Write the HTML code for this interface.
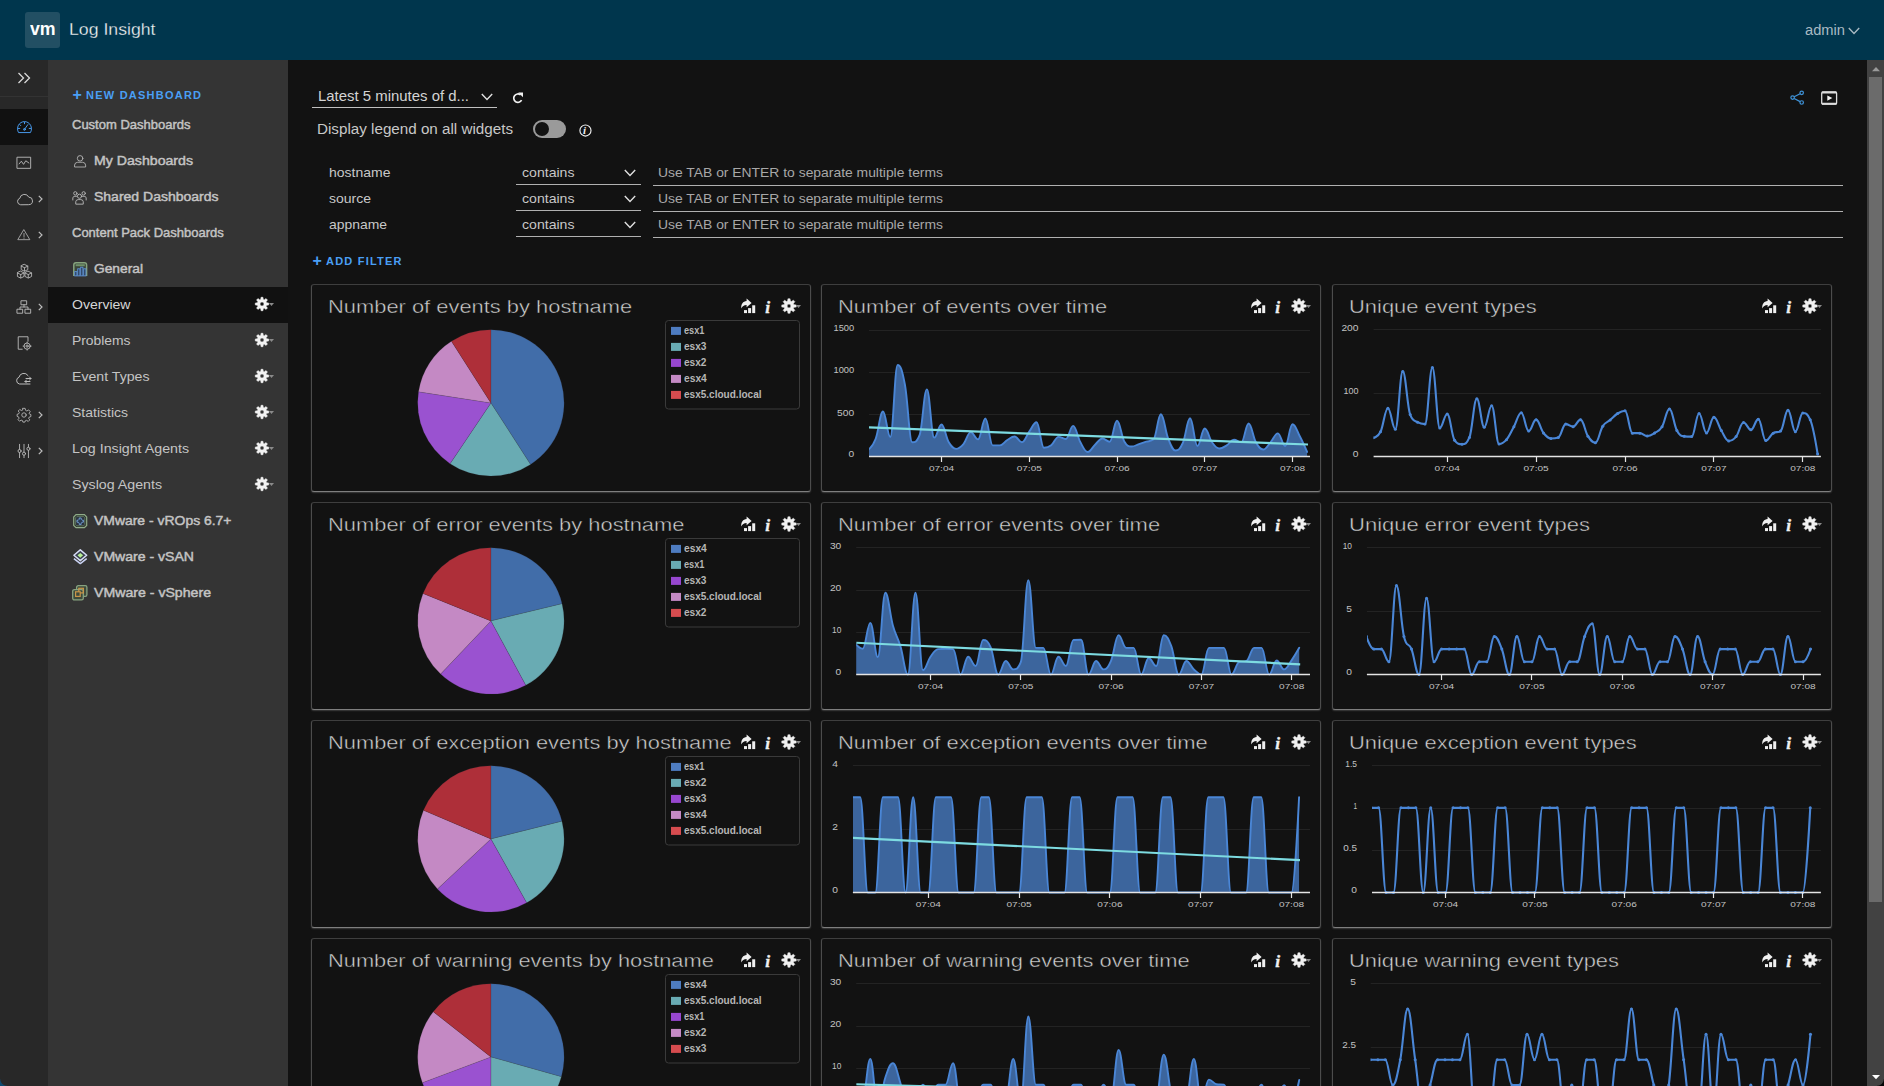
<!DOCTYPE html>
<html lang="en">
<head>
<meta charset="utf-8">
<title>Log Insight</title>
<style>
html,body{margin:0;padding:0;}
body{width:1884px;height:1086px;overflow:hidden;background:#121212;position:relative;font-family:"Liberation Sans",sans-serif;color:#c8c8c8;}
.t{position:absolute;white-space:nowrap;margin:0;padding:0;transform-origin:0 50%;}
.abs{position:absolute;}
svg{position:absolute;overflow:visible;}
.panel{position:absolute;width:498px;height:206px;border:1px solid #4c4c4c;border-top-color:#3e3e3e;border-bottom-color:#7e7e7e;border-radius:3px;box-shadow:0 1px 1.5px 0 #3c3c3c;background:#121212;}
.ul{position:absolute;height:1px;background:#b0b0b0;}
svg text{font-family:"Liberation Sans",sans-serif;}
</style>
</head>
<body>
<div class="abs" style="left:0;top:0;width:1884px;height:60px;background:#00364d;"></div>
<div class="abs" style="left:24.6px;top:12px;width:35.4px;height:36px;border-radius:3px;background:#224f63;"></div>
<div class="t" style="left:29.80px;top:18.00px;font-size:19px;line-height:21px;color:#ffffff;font-weight:700;transform:scaleX(0.9322);">vm</div>
<div class="t" style="left:69.00px;top:20.00px;font-size:17px;line-height:19px;color:#fafafa;transform:scaleX(1.0400);-webkit-text-stroke:0.3px #00364d;">Log Insight</div>
<div class="t" style="left:1805.00px;top:22.00px;font-size:14px;line-height:16px;color:#a9bac3;transform:scaleX(1.0490);">admin</div>
<svg style="left:1848px;top:27px" width="12" height="8" viewBox="0 0 12 8"><path d="M0.8 1 L6 6.4 L11.2 1" fill="none" stroke="#a9bac3" stroke-width="1.4"/></svg>
<div class="abs" style="left:0;top:60px;width:48px;height:1026px;background:#282828;"></div>
<div class="abs" style="left:0;top:96px;width:48px;height:1px;background:#333333;"></div>
<div class="abs" style="left:0;top:109px;width:48px;height:36px;background:#111111;"></div>
<svg style="left:17px;top:72px" width="14" height="12" viewBox="0 0 14 12"><path d="M1.5 1 L6.5 6 L1.5 11 M7.5 1 L12.5 6 L7.5 11" fill="none" stroke="#d8d8d8" stroke-width="1.3"/></svg>
<svg style="left:15.5px;top:118.5px" width="17" height="17" viewBox="0 0 36 36" fill="none" stroke="#4a9ff5" stroke-width="2" stroke-linecap="round" stroke-linejoin="round"><path d="M5 28 A15 15 0 1 1 31 28 Z"/><path d="M18 22 L25 12"/><circle cx="18" cy="22" r="2"/><path d="M18 7 v3 M8 12 l2 2 M5 20 h3 M28 20 h3"/></svg>
<svg style="left:16.0px;top:155.0px" width="16" height="16" viewBox="0 0 36 36" fill="none" stroke="#bdbdbd" stroke-width="2" stroke-linecap="round" stroke-linejoin="round"><rect x="3" y="5" width="30" height="25"/><path d="M7 20 L12 14 L17 21 L22 13 L29 18"/></svg>
<svg style="left:15.5px;top:190.5px" width="17" height="17" viewBox="0 0 36 36" fill="none" stroke="#bdbdbd" stroke-width="2" stroke-linecap="round" stroke-linejoin="round"><path d="M9 29 A7 7 0 0 1 8 15.5 A10 10 0 0 1 27 13 A8 8 0 0 1 27 29 Z"/></svg>
<svg style="left:37.5px;top:195px" width="5" height="8" viewBox="0 0 5 8"><path d="M0.8 0.8 L4 4 L0.8 7.2" fill="none" stroke="#bdbdbd" stroke-width="1.2"/></svg>
<svg style="left:17.0px;top:228.0px" width="14" height="14" viewBox="0 0 36 36" fill="none" stroke="#bdbdbd" stroke-width="2" stroke-linecap="round" stroke-linejoin="round"><path d="M18 5 L33 30 H3 Z"/><path d="M18 14 V22 M18 25.5 V26.5"/></svg>
<svg style="left:37.5px;top:231px" width="5" height="8" viewBox="0 0 5 8"><path d="M0.8 0.8 L4 4 L0.8 7.2" fill="none" stroke="#bdbdbd" stroke-width="1.2"/></svg>
<svg style="left:15.5px;top:262.5px" width="17" height="17" viewBox="0 0 36 36" fill="none" stroke="#bdbdbd" stroke-width="1.8" stroke-linecap="round" stroke-linejoin="round"><path d="M18 3 L25 6.5 V14 L18 17.5 L11 14 V6.5 Z M11 6.5 L18 10 L25 6.5 M18 10 V17"/><path d="M10 17.5 L17 21 V28.5 L10 32 L3 28.5 V21 Z M3 21 L10 24.5 L17 21 M10 24.5 V31"/><path d="M26 17.5 L33 21 V28.5 L26 32 L19 28.5 V21 Z M19 21 L26 24.5 L33 21 M26 24.5 V31"/></svg>
<svg style="left:16.0px;top:299.0px" width="16" height="16" viewBox="0 0 36 36" fill="none" stroke="#bdbdbd" stroke-width="2" stroke-linecap="round" stroke-linejoin="round"><rect x="12" y="4" width="12" height="9"/><rect x="3" y="23" width="12" height="9"/><rect x="21" y="23" width="12" height="9"/><path d="M18 13 V18 M9 23 V18 H27 V23"/></svg>
<svg style="left:37.5px;top:303px" width="5" height="8" viewBox="0 0 5 8"><path d="M0.8 0.8 L4 4 L0.8 7.2" fill="none" stroke="#bdbdbd" stroke-width="1.2"/></svg>
<svg style="left:16.0px;top:335.0px" width="16" height="16" viewBox="0 0 36 36" fill="none" stroke="#bdbdbd" stroke-width="2" stroke-linecap="round" stroke-linejoin="round"><path d="M14 32 H5 V4 H27 V14"/><circle cx="25" cy="25" r="7"/><circle cx="25" cy="25" r="2.5"/><path d="M25 16 v2 M25 32 v2 M16 25 h2 M32 25 h2"/></svg>
<svg style="left:15.0px;top:370.0px" width="18" height="18" viewBox="0 0 36 36" fill="none" stroke="#bdbdbd" stroke-width="2" stroke-linecap="round" stroke-linejoin="round"><path d="M30 28 H9 A7 7 0 0 1 8 14.5 A10 10 0 0 1 26 11"/><path d="M22 17 H32 M29 14 L32 17 L29 20 M30 23 H20 M23 20 L20 23 L23 26"/></svg>
<svg style="left:16.0px;top:407.0px" width="16" height="16" viewBox="0 0 36 36" fill="none" stroke="#bdbdbd" stroke-width="1.9" stroke-linecap="round" stroke-linejoin="round"><circle cx="18" cy="18" r="5"/><path d="M15.5 3 H20.5 L21.5 7.5 L24.5 9 L28.5 6.5 L32 10.5 L29.5 14 L30.5 16 L33.5 17 V21.5 L30 22.5 L28.5 25.5 L31 29 L27.5 32.5 L24 30 L21 31 L20 34 H15.5 L14.5 30.5 L11.5 29.5 L8 32 L4.5 28.5 L7 25 L5.5 22 L2.5 21 V16.5 L6 15.5 L7.5 12.5 L5 9 L8.5 5.5 L12 8 L14.5 7 Z"/></svg>
<svg style="left:37.5px;top:411px" width="5" height="8" viewBox="0 0 5 8"><path d="M0.8 0.8 L4 4 L0.8 7.2" fill="none" stroke="#bdbdbd" stroke-width="1.2"/></svg>
<svg style="left:16.0px;top:443.0px" width="16" height="16" viewBox="0 0 36 36" fill="none" stroke="#bdbdbd" stroke-width="2" stroke-linecap="round" stroke-linejoin="round"><path d="M8 3 V14 M8 22 V33 M18 3 V20 M18 28 V33 M28 3 V9 M28 17 V33"/><circle cx="8" cy="18" r="3.5"/><circle cx="18" cy="24" r="3.5"/><circle cx="28" cy="13" r="3.5"/></svg>
<svg style="left:37.5px;top:447px" width="5" height="8" viewBox="0 0 5 8"><path d="M0.8 0.8 L4 4 L0.8 7.2" fill="none" stroke="#bdbdbd" stroke-width="1.2"/></svg>
<div class="abs" style="left:48px;top:60px;width:240px;height:1026px;background:#343434;"></div>
<div class="abs" style="left:48px;top:287px;width:240px;height:36px;background:#111111;"></div>
<div class="t" style="left:72.60px;top:86.30px;font-size:16px;line-height:17px;color:#4a9ff5;font-weight:700;">+</div>
<div class="t" style="left:86.00px;top:89.00px;font-size:11px;line-height:12px;color:#4a9ff5;font-weight:700;letter-spacing:1.232px;">NEW DASHBOARD</div>
<div class="t" style="left:72.00px;top:117.00px;font-size:13px;line-height:15px;color:#c4c4c4;-webkit-text-stroke:0.45px #c4c4c4;">Custom Dashboards</div>
<div class="t" style="left:94.00px;top:153.00px;font-size:13px;line-height:15px;color:#c4c4c4;transform:scaleX(1.0875);-webkit-text-stroke:0.45px #c4c4c4;">My Dashboards</div>
<div class="t" style="left:94.00px;top:189.00px;font-size:13px;line-height:15px;color:#c4c4c4;transform:scaleX(1.0767);-webkit-text-stroke:0.45px #c4c4c4;">Shared Dashboards</div>
<div class="t" style="left:72.00px;top:225.00px;font-size:13px;line-height:15px;color:#c4c4c4;-webkit-text-stroke:0.45px #c4c4c4;">Content Pack Dashboards</div>
<div class="t" style="left:94.00px;top:261.00px;font-size:13px;line-height:15px;color:#c4c4c4;transform:scaleX(1.0595);-webkit-text-stroke:0.45px #c4c4c4;">General</div>
<div class="t" style="left:72.00px;top:297.00px;font-size:13.5px;line-height:15px;color:#d6d6d6;transform:scaleX(1.0398);">Overview</div>
<svg style="left:253.50px;top:296.40px" width="16" height="16" viewBox="0 0 16 16"><path d="M6.73 3.43 L7.00 1.29 L9.00 1.29 L9.27 3.43 L10.34 3.87 L12.04 2.54 L13.46 3.96 L12.13 5.66 L12.57 6.73 L14.71 7.00 L14.71 9.00 L12.57 9.27 L12.13 10.34 L13.46 12.04 L12.04 13.46 L10.34 12.13 L9.27 12.57 L9.00 14.71 L7.00 14.71 L6.73 12.57 L5.66 12.13 L3.96 13.46 L2.54 12.04 L3.87 10.34 L3.43 9.27 L1.29 9.00 L1.29 7.00 L3.43 6.73 L3.87 5.66 L2.54 3.96 L3.96 2.54 L5.66 3.87 Z M6.00 8.00 A2.0 2.0 0 1 0 10.00 8.00 A2.0 2.0 0 1 0 6.00 8.00 Z" fill="#f2f2f2" fill-rule="evenodd" stroke="#f2f2f2" stroke-width="0.5" stroke-linejoin="round"/></svg><svg style="left:268.57px;top:303.40px" width="5" height="3" viewBox="0 0 5 3"><path d="M0 0 H5 L2.5 3 Z" fill="#8a8a8a"/></svg>
<div class="t" style="left:72.00px;top:333.00px;font-size:13.5px;line-height:15px;color:#c4c4c4;transform:scaleX(1.0260);">Problems</div>
<svg style="left:253.50px;top:332.40px" width="16" height="16" viewBox="0 0 16 16"><path d="M6.73 3.43 L7.00 1.29 L9.00 1.29 L9.27 3.43 L10.34 3.87 L12.04 2.54 L13.46 3.96 L12.13 5.66 L12.57 6.73 L14.71 7.00 L14.71 9.00 L12.57 9.27 L12.13 10.34 L13.46 12.04 L12.04 13.46 L10.34 12.13 L9.27 12.57 L9.00 14.71 L7.00 14.71 L6.73 12.57 L5.66 12.13 L3.96 13.46 L2.54 12.04 L3.87 10.34 L3.43 9.27 L1.29 9.00 L1.29 7.00 L3.43 6.73 L3.87 5.66 L2.54 3.96 L3.96 2.54 L5.66 3.87 Z M6.00 8.00 A2.0 2.0 0 1 0 10.00 8.00 A2.0 2.0 0 1 0 6.00 8.00 Z" fill="#f2f2f2" fill-rule="evenodd" stroke="#f2f2f2" stroke-width="0.5" stroke-linejoin="round"/></svg><svg style="left:268.57px;top:339.40px" width="5" height="3" viewBox="0 0 5 3"><path d="M0 0 H5 L2.5 3 Z" fill="#8a8a8a"/></svg>
<div class="t" style="left:72.00px;top:369.00px;font-size:13.5px;line-height:15px;color:#c4c4c4;transform:scaleX(1.0467);">Event Types</div>
<svg style="left:253.50px;top:368.40px" width="16" height="16" viewBox="0 0 16 16"><path d="M6.73 3.43 L7.00 1.29 L9.00 1.29 L9.27 3.43 L10.34 3.87 L12.04 2.54 L13.46 3.96 L12.13 5.66 L12.57 6.73 L14.71 7.00 L14.71 9.00 L12.57 9.27 L12.13 10.34 L13.46 12.04 L12.04 13.46 L10.34 12.13 L9.27 12.57 L9.00 14.71 L7.00 14.71 L6.73 12.57 L5.66 12.13 L3.96 13.46 L2.54 12.04 L3.87 10.34 L3.43 9.27 L1.29 9.00 L1.29 7.00 L3.43 6.73 L3.87 5.66 L2.54 3.96 L3.96 2.54 L5.66 3.87 Z M6.00 8.00 A2.0 2.0 0 1 0 10.00 8.00 A2.0 2.0 0 1 0 6.00 8.00 Z" fill="#f2f2f2" fill-rule="evenodd" stroke="#f2f2f2" stroke-width="0.5" stroke-linejoin="round"/></svg><svg style="left:268.57px;top:375.40px" width="5" height="3" viewBox="0 0 5 3"><path d="M0 0 H5 L2.5 3 Z" fill="#8a8a8a"/></svg>
<div class="t" style="left:72.00px;top:405.00px;font-size:13.5px;line-height:15px;color:#c4c4c4;transform:scaleX(1.0368);">Statistics</div>
<svg style="left:253.50px;top:404.40px" width="16" height="16" viewBox="0 0 16 16"><path d="M6.73 3.43 L7.00 1.29 L9.00 1.29 L9.27 3.43 L10.34 3.87 L12.04 2.54 L13.46 3.96 L12.13 5.66 L12.57 6.73 L14.71 7.00 L14.71 9.00 L12.57 9.27 L12.13 10.34 L13.46 12.04 L12.04 13.46 L10.34 12.13 L9.27 12.57 L9.00 14.71 L7.00 14.71 L6.73 12.57 L5.66 12.13 L3.96 13.46 L2.54 12.04 L3.87 10.34 L3.43 9.27 L1.29 9.00 L1.29 7.00 L3.43 6.73 L3.87 5.66 L2.54 3.96 L3.96 2.54 L5.66 3.87 Z M6.00 8.00 A2.0 2.0 0 1 0 10.00 8.00 A2.0 2.0 0 1 0 6.00 8.00 Z" fill="#f2f2f2" fill-rule="evenodd" stroke="#f2f2f2" stroke-width="0.5" stroke-linejoin="round"/></svg><svg style="left:268.57px;top:411.40px" width="5" height="3" viewBox="0 0 5 3"><path d="M0 0 H5 L2.5 3 Z" fill="#8a8a8a"/></svg>
<div class="t" style="left:72.00px;top:441.00px;font-size:13.5px;line-height:15px;color:#c4c4c4;transform:scaleX(1.0533);">Log Insight Agents</div>
<svg style="left:253.50px;top:440.40px" width="16" height="16" viewBox="0 0 16 16"><path d="M6.73 3.43 L7.00 1.29 L9.00 1.29 L9.27 3.43 L10.34 3.87 L12.04 2.54 L13.46 3.96 L12.13 5.66 L12.57 6.73 L14.71 7.00 L14.71 9.00 L12.57 9.27 L12.13 10.34 L13.46 12.04 L12.04 13.46 L10.34 12.13 L9.27 12.57 L9.00 14.71 L7.00 14.71 L6.73 12.57 L5.66 12.13 L3.96 13.46 L2.54 12.04 L3.87 10.34 L3.43 9.27 L1.29 9.00 L1.29 7.00 L3.43 6.73 L3.87 5.66 L2.54 3.96 L3.96 2.54 L5.66 3.87 Z M6.00 8.00 A2.0 2.0 0 1 0 10.00 8.00 A2.0 2.0 0 1 0 6.00 8.00 Z" fill="#f2f2f2" fill-rule="evenodd" stroke="#f2f2f2" stroke-width="0.5" stroke-linejoin="round"/></svg><svg style="left:268.57px;top:447.40px" width="5" height="3" viewBox="0 0 5 3"><path d="M0 0 H5 L2.5 3 Z" fill="#8a8a8a"/></svg>
<div class="t" style="left:72.00px;top:477.00px;font-size:13.5px;line-height:15px;color:#c4c4c4;transform:scaleX(1.0520);">Syslog Agents</div>
<svg style="left:253.50px;top:476.40px" width="16" height="16" viewBox="0 0 16 16"><path d="M6.73 3.43 L7.00 1.29 L9.00 1.29 L9.27 3.43 L10.34 3.87 L12.04 2.54 L13.46 3.96 L12.13 5.66 L12.57 6.73 L14.71 7.00 L14.71 9.00 L12.57 9.27 L12.13 10.34 L13.46 12.04 L12.04 13.46 L10.34 12.13 L9.27 12.57 L9.00 14.71 L7.00 14.71 L6.73 12.57 L5.66 12.13 L3.96 13.46 L2.54 12.04 L3.87 10.34 L3.43 9.27 L1.29 9.00 L1.29 7.00 L3.43 6.73 L3.87 5.66 L2.54 3.96 L3.96 2.54 L5.66 3.87 Z M6.00 8.00 A2.0 2.0 0 1 0 10.00 8.00 A2.0 2.0 0 1 0 6.00 8.00 Z" fill="#f2f2f2" fill-rule="evenodd" stroke="#f2f2f2" stroke-width="0.5" stroke-linejoin="round"/></svg><svg style="left:268.57px;top:483.40px" width="5" height="3" viewBox="0 0 5 3"><path d="M0 0 H5 L2.5 3 Z" fill="#8a8a8a"/></svg>
<div class="t" style="left:94.00px;top:513.00px;font-size:13px;line-height:15px;color:#c4c4c4;transform:scaleX(1.0722);-webkit-text-stroke:0.45px #c4c4c4;">VMware - vROps 6.7+</div>
<div class="t" style="left:94.00px;top:549.00px;font-size:13px;line-height:15px;color:#c4c4c4;transform:scaleX(1.0816);-webkit-text-stroke:0.45px #c4c4c4;">VMware - vSAN</div>
<div class="t" style="left:94.00px;top:585.00px;font-size:13px;line-height:15px;color:#c4c4c4;transform:scaleX(1.0869);-webkit-text-stroke:0.45px #c4c4c4;">VMware - vSphere</div>
<svg style="left:72.5px;top:154.1px" width="14.2" height="14.2" viewBox="0 0 36 36" fill="none" stroke="#b8b8b8" stroke-width="2.2" stroke-linecap="round" stroke-linejoin="round"><circle cx="18" cy="11" r="7"/><path d="M4 32 V28 A8 8 0 0 1 12 21 H24 A8 8 0 0 1 32 28 V32 Z"/></svg>
<svg style="left:72.1px;top:189.7px" width="15" height="15" viewBox="0 0 36 36" fill="none" stroke="#b8b8b8" stroke-width="2.2" stroke-linecap="round" stroke-linejoin="round"><circle cx="18" cy="15" r="5"/><path d="M9 33 V28 A6 6 0 0 1 15 23 H21 A6 6 0 0 1 27 28 V33 Z"/><circle cx="8" cy="8" r="4"/><circle cx="28" cy="8" r="4"/><path d="M2 24 V19 A5 5 0 0 1 7 15 H11 M34 24 V19 A5 5 0 0 0 29 15 H25"/></svg>
<svg style="left:72.7px;top:261.8px" width="14.4" height="14.4" viewBox="0 0 14.4 14.4"><path d="M0.8 14 V3 Q0.8 0.8 3 0.8 H11.4 Q13.6 0.8 13.6 3 V14" fill="#3b463a" stroke="#86a47e" stroke-width="1.5"/><path d="M2.6 3.2 H11.8" stroke="#6f8f68" stroke-width="2"/><g fill="#2c3f5a" stroke="#5f93d6" stroke-width="0.9"><rect x="1.7" y="9.6" width="2.2" height="4.3"/><rect x="4.7" y="6.8" width="2.2" height="7.1"/><rect x="7.7" y="5.2" width="2.2" height="8.7"/><rect x="10.7" y="6.8" width="2.2" height="7.1"/></g></svg>
<svg style="left:72.8px;top:513.8px" width="14.4" height="14.4" viewBox="0 0 14.4 14.4"><path d="M3 0.7 H11.4 L13.7 3 V11.4 L11.4 13.7 H3 L0.7 11.4 V3 Z" fill="#2f382f" stroke="#8fab88" stroke-width="1.2"/><path d="M3.8 2.6 H10.6 L11.8 3.8 V10.6 L10.6 11.8 H3.8 L2.6 10.6 V3.8 Z" fill="#2c3340" stroke="#6f8a6a" stroke-width="0.7"/><path d="M6.2 4 H8.2 V5.3 L9.1 6.2 H10.4 V8.2 H9.1 L8.2 9.1 V10.4 H6.2 V9.1 L5.3 8.2 H4 V6.2 H5.3 L6.2 5.3 Z" fill="#2a3a50" stroke="#78a6dc" stroke-width="0.9" stroke-linejoin="round"/></svg>
<svg style="left:72.8px;top:548.6px" width="14.6" height="16.6" viewBox="0 0 14.6 16.6"><path d="M0.9 9.6 L7.3 14.6 L13.7 9.6" fill="none" stroke="#c9d2f3" stroke-width="1.5" stroke-linejoin="round"/><path d="M7.3 0.9 L13.7 6.3 L7.3 11.7 L0.9 6.3 Z" fill="#3b4150" stroke="#d6dcf6" stroke-width="1.5" stroke-linejoin="round"/><path d="M7.3 3.9 L10.1 6.3 L7.3 8.7 L4.5 6.3 Z" fill="#b6ee92"/></svg>
<svg style="left:72.4px;top:585.2px" width="15.6" height="15.6" viewBox="0 0 15.6 15.6"><rect x="4.6" y="0.7" width="10.3" height="10.6" rx="1.6" fill="#3d4a3b" stroke="#87a380" stroke-width="1.3"/><rect x="0.7" y="4.6" width="10.6" height="10.3" rx="1.6" fill="#3d4a3b" stroke="#87a380" stroke-width="1.3"/><rect x="6.8" y="3.3" width="4.6" height="4.6" fill="none" stroke="#c9964a" stroke-width="1.2"/><rect x="3.6" y="6.8" width="4.6" height="4.6" fill="#3d4a3b" stroke="#c9964a" stroke-width="1.2"/></svg>
<div class="abs" style="left:1867px;top:60px;width:17px;height:1026px;background:#424242;"></div>
<div class="abs" style="left:1869px;top:77px;width:13px;height:825px;background:#6b6b6b;"></div>
<svg style="left:1871.5px;top:66.8px" width="8" height="4.2" viewBox="0 0 8 4.2"><path d="M0 4.2 L4 0 L8 4.2 Z" fill="#9a9a9a"/></svg>
<svg style="left:1871.5px;top:1075px" width="8" height="4.2" viewBox="0 0 8 4.2"><path d="M0 0 L4 4.2 L8 0 Z" fill="#ffffff"/></svg>
<div class="abs" style="left:0;top:1079px;width:7px;height:7px;background:radial-gradient(circle at 7px 0px, rgba(40,40,40,0) 6.3px, #0d4a70 7.2px);"></div>
<div class="abs" style="left:1877px;top:1079px;width:7px;height:7px;background:radial-gradient(circle at 0px 0px, rgba(66,66,66,0) 6.3px, #050505 7.2px);"></div>
<div class="t" style="left:317.50px;top:88.00px;font-size:14.5px;line-height:16px;color:#d4d4d4;transform:scaleX(1.0294);">Latest 5 minutes of d...</div>
<div class="ul" style="left:312px;top:107px;width:185px;background:#c0c0c0;"></div>
<svg style="left:480.6px;top:93px" width="12" height="8" viewBox="0 0 12 8"><path d="M0.8 1 L6 6.4 L11.2 1" fill="none" stroke="#e0e0e0" stroke-width="1.4"/></svg>
<svg style="left:512px;top:92px" width="12" height="12" viewBox="0 0 12 12"><path d="M9.6 8.2 A4.2 4.2 0 1 1 8.6 2.9" fill="none" stroke="#f0f0f0" stroke-width="1.7"/><path d="M6.3 0.6 H11 V5.3 Z" fill="#f0f0f0"/></svg>
<div class="t" style="left:317.00px;top:121.00px;font-size:14px;line-height:16px;color:#c8c8c8;transform:scaleX(1.0856);">Display legend on all widgets</div>
<div class="abs" style="left:533px;top:120px;width:33px;height:18px;border-radius:9px;background:#9a9a9a;"></div>
<div class="abs" style="left:535px;top:122px;width:14px;height:14px;border-radius:7px;background:#121212;"></div>
<svg style="left:578.5px;top:123.5px" width="13" height="13" viewBox="0 0 13 13"><circle cx="6.45" cy="6.5" r="5.55" fill="none" stroke="#f0f0f0" stroke-width="1.15"/></svg>
<div class="t" style="left:583.00px;top:124.00px;font-size:11px;line-height:12px;color:#f0f0f0;font-weight:700;font-family:&quot;Liberation Serif&quot;,serif;font-style:italic;">i</div>
<svg style="left:1789.5px;top:90.3px" width="15" height="15" viewBox="0 0 15 15" fill="none" stroke="#3f93d8" stroke-width="1.2"><circle cx="11.7" cy="2.8" r="1.75"/><circle cx="2.6" cy="7.6" r="1.75"/><circle cx="11.7" cy="12.5" r="1.75"/><path d="M4.2 6.8 L10.1 3.7 M4.2 8.5 L10.1 11.6"/></svg>
<svg style="left:1821px;top:91px" width="17" height="14" viewBox="0 0 17 14"><rect x="0.7" y="1.0" width="14.9" height="12.2" rx="1.2" fill="none" stroke="#dcdcdc" stroke-width="1.3"/><path d="M1 1.4 H15.3 M1 12.8 H15.3" stroke="#dcdcdc" stroke-width="2.0" fill="none"/><path d="M6.3 4.4 L11.3 7.1 L6.3 9.8 Z" fill="#f4f4f4"/></svg>
<div class="t" style="left:329.00px;top:165.00px;font-size:13.5px;line-height:15px;color:#c8c8c8;transform:scaleX(1.0374);">hostname</div>
<div class="t" style="left:522.00px;top:165.00px;font-size:13.5px;line-height:15px;color:#c8c8c8;transform:scaleX(1.0441);">contains</div>
<div class="ul" style="left:516px;top:184px;width:125px;"></div>
<svg style="left:623.9px;top:169.4px" width="12" height="8" viewBox="0 0 12 8"><path d="M0.8 1 L6 6.4 L11.2 1" fill="none" stroke="#e0e0e0" stroke-width="1.4"/></svg>
<div class="t" style="left:658.00px;top:165.00px;font-size:13px;line-height:15px;color:#a8a8a8;transform:scaleX(1.0681);">Use TAB or ENTER to separate multiple terms</div>
<div class="ul" style="left:653px;top:185px;width:1190px;"></div>
<div class="t" style="left:329.00px;top:191.00px;font-size:13.5px;line-height:15px;color:#c8c8c8;transform:scaleX(1.0366);">source</div>
<div class="t" style="left:522.00px;top:191.00px;font-size:13.5px;line-height:15px;color:#c8c8c8;transform:scaleX(1.0441);">contains</div>
<div class="ul" style="left:516px;top:210px;width:125px;"></div>
<svg style="left:623.9px;top:195.4px" width="12" height="8" viewBox="0 0 12 8"><path d="M0.8 1 L6 6.4 L11.2 1" fill="none" stroke="#e0e0e0" stroke-width="1.4"/></svg>
<div class="t" style="left:658.00px;top:191.00px;font-size:13px;line-height:15px;color:#a8a8a8;transform:scaleX(1.0681);">Use TAB or ENTER to separate multiple terms</div>
<div class="ul" style="left:653px;top:211px;width:1190px;"></div>
<div class="t" style="left:329.00px;top:217.00px;font-size:13.5px;line-height:15px;color:#c8c8c8;transform:scaleX(1.0303);">appname</div>
<div class="t" style="left:522.00px;top:217.00px;font-size:13.5px;line-height:15px;color:#c8c8c8;transform:scaleX(1.0441);">contains</div>
<div class="ul" style="left:516px;top:236px;width:125px;"></div>
<svg style="left:623.9px;top:221.4px" width="12" height="8" viewBox="0 0 12 8"><path d="M0.8 1 L6 6.4 L11.2 1" fill="none" stroke="#e0e0e0" stroke-width="1.4"/></svg>
<div class="t" style="left:658.00px;top:217.00px;font-size:13px;line-height:15px;color:#a8a8a8;transform:scaleX(1.0681);">Use TAB or ENTER to separate multiple terms</div>
<div class="ul" style="left:653px;top:237px;width:1190px;"></div>
<div class="t" style="left:312.60px;top:252.30px;font-size:16px;line-height:17px;color:#4a9ff5;font-weight:700;">+</div>
<div class="t" style="left:326.00px;top:255.00px;font-size:11px;line-height:12px;color:#4a9ff5;font-weight:700;letter-spacing:1.215px;">ADD FILTER</div>
<div class="panel" style="left:311px;top:284px;"></div>
<div class="t" style="left:328.00px;top:295.50px;font-size:19px;line-height:21px;color:#d2d2d2;transform:scaleX(1.1522);-webkit-text-stroke:0.45px #121212;">Number of events by hostname</div>
<svg style="left:780.80px;top:298.10px" width="16" height="16" viewBox="0 0 16 16"><path d="M6.64 3.09 L6.92 0.78 L9.08 0.78 L9.36 3.09 L10.51 3.56 L12.34 2.13 L13.87 3.66 L12.44 5.49 L12.91 6.64 L15.22 6.92 L15.22 9.08 L12.91 9.36 L12.44 10.51 L13.87 12.34 L12.34 13.87 L10.51 12.44 L9.36 12.91 L9.08 15.22 L6.92 15.22 L6.64 12.91 L5.49 12.44 L3.66 13.87 L2.13 12.34 L3.56 10.51 L3.09 9.36 L0.78 9.08 L0.78 6.92 L3.09 6.64 L3.56 5.49 L2.13 3.66 L3.66 2.13 L5.49 3.56 Z M6.10 8.00 A1.9 1.9 0 1 0 9.90 8.00 A1.9 1.9 0 1 0 6.10 8.00 Z" fill="#f0f0f0" fill-rule="evenodd" stroke="#f0f0f0" stroke-width="0.5" stroke-linejoin="round"/></svg><svg style="left:796.40px;top:305.10px" width="5" height="3" viewBox="0 0 5 3"><path d="M0 0 H5 L2.5 3 Z" fill="#8a8a8a"/></svg>
<div class="panel" style="left:821px;top:284px;"></div>
<div class="t" style="left:838.00px;top:295.50px;font-size:19px;line-height:21px;color:#d2d2d2;transform:scaleX(1.1531);-webkit-text-stroke:0.45px #121212;">Number of events over time</div>
<svg style="left:1290.80px;top:298.10px" width="16" height="16" viewBox="0 0 16 16"><path d="M6.64 3.09 L6.92 0.78 L9.08 0.78 L9.36 3.09 L10.51 3.56 L12.34 2.13 L13.87 3.66 L12.44 5.49 L12.91 6.64 L15.22 6.92 L15.22 9.08 L12.91 9.36 L12.44 10.51 L13.87 12.34 L12.34 13.87 L10.51 12.44 L9.36 12.91 L9.08 15.22 L6.92 15.22 L6.64 12.91 L5.49 12.44 L3.66 13.87 L2.13 12.34 L3.56 10.51 L3.09 9.36 L0.78 9.08 L0.78 6.92 L3.09 6.64 L3.56 5.49 L2.13 3.66 L3.66 2.13 L5.49 3.56 Z M6.10 8.00 A1.9 1.9 0 1 0 9.90 8.00 A1.9 1.9 0 1 0 6.10 8.00 Z" fill="#f0f0f0" fill-rule="evenodd" stroke="#f0f0f0" stroke-width="0.5" stroke-linejoin="round"/></svg><svg style="left:1306.40px;top:305.10px" width="5" height="3" viewBox="0 0 5 3"><path d="M0 0 H5 L2.5 3 Z" fill="#8a8a8a"/></svg>
<div class="panel" style="left:1332px;top:284px;"></div>
<div class="t" style="left:1348.50px;top:295.50px;font-size:19px;line-height:21px;color:#d2d2d2;transform:scaleX(1.1533);-webkit-text-stroke:0.45px #121212;">Unique event types</div>
<svg style="left:1801.80px;top:298.10px" width="16" height="16" viewBox="0 0 16 16"><path d="M6.64 3.09 L6.92 0.78 L9.08 0.78 L9.36 3.09 L10.51 3.56 L12.34 2.13 L13.87 3.66 L12.44 5.49 L12.91 6.64 L15.22 6.92 L15.22 9.08 L12.91 9.36 L12.44 10.51 L13.87 12.34 L12.34 13.87 L10.51 12.44 L9.36 12.91 L9.08 15.22 L6.92 15.22 L6.64 12.91 L5.49 12.44 L3.66 13.87 L2.13 12.34 L3.56 10.51 L3.09 9.36 L0.78 9.08 L0.78 6.92 L3.09 6.64 L3.56 5.49 L2.13 3.66 L3.66 2.13 L5.49 3.56 Z M6.10 8.00 A1.9 1.9 0 1 0 9.90 8.00 A1.9 1.9 0 1 0 6.10 8.00 Z" fill="#f0f0f0" fill-rule="evenodd" stroke="#f0f0f0" stroke-width="0.5" stroke-linejoin="round"/></svg><svg style="left:1817.40px;top:305.10px" width="5" height="3" viewBox="0 0 5 3"><path d="M0 0 H5 L2.5 3 Z" fill="#8a8a8a"/></svg>
<div class="panel" style="left:311px;top:502px;"></div>
<div class="t" style="left:328.00px;top:513.50px;font-size:19px;line-height:21px;color:#d2d2d2;transform:scaleX(1.1519);-webkit-text-stroke:0.45px #121212;">Number of error events by hostname</div>
<svg style="left:780.80px;top:516.10px" width="16" height="16" viewBox="0 0 16 16"><path d="M6.64 3.09 L6.92 0.78 L9.08 0.78 L9.36 3.09 L10.51 3.56 L12.34 2.13 L13.87 3.66 L12.44 5.49 L12.91 6.64 L15.22 6.92 L15.22 9.08 L12.91 9.36 L12.44 10.51 L13.87 12.34 L12.34 13.87 L10.51 12.44 L9.36 12.91 L9.08 15.22 L6.92 15.22 L6.64 12.91 L5.49 12.44 L3.66 13.87 L2.13 12.34 L3.56 10.51 L3.09 9.36 L0.78 9.08 L0.78 6.92 L3.09 6.64 L3.56 5.49 L2.13 3.66 L3.66 2.13 L5.49 3.56 Z M6.10 8.00 A1.9 1.9 0 1 0 9.90 8.00 A1.9 1.9 0 1 0 6.10 8.00 Z" fill="#f0f0f0" fill-rule="evenodd" stroke="#f0f0f0" stroke-width="0.5" stroke-linejoin="round"/></svg><svg style="left:796.40px;top:523.10px" width="5" height="3" viewBox="0 0 5 3"><path d="M0 0 H5 L2.5 3 Z" fill="#8a8a8a"/></svg>
<div class="panel" style="left:821px;top:502px;"></div>
<div class="t" style="left:838.00px;top:513.50px;font-size:19px;line-height:21px;color:#d2d2d2;transform:scaleX(1.1555);-webkit-text-stroke:0.45px #121212;">Number of error events over time</div>
<svg style="left:1290.80px;top:516.10px" width="16" height="16" viewBox="0 0 16 16"><path d="M6.64 3.09 L6.92 0.78 L9.08 0.78 L9.36 3.09 L10.51 3.56 L12.34 2.13 L13.87 3.66 L12.44 5.49 L12.91 6.64 L15.22 6.92 L15.22 9.08 L12.91 9.36 L12.44 10.51 L13.87 12.34 L12.34 13.87 L10.51 12.44 L9.36 12.91 L9.08 15.22 L6.92 15.22 L6.64 12.91 L5.49 12.44 L3.66 13.87 L2.13 12.34 L3.56 10.51 L3.09 9.36 L0.78 9.08 L0.78 6.92 L3.09 6.64 L3.56 5.49 L2.13 3.66 L3.66 2.13 L5.49 3.56 Z M6.10 8.00 A1.9 1.9 0 1 0 9.90 8.00 A1.9 1.9 0 1 0 6.10 8.00 Z" fill="#f0f0f0" fill-rule="evenodd" stroke="#f0f0f0" stroke-width="0.5" stroke-linejoin="round"/></svg><svg style="left:1306.40px;top:523.10px" width="5" height="3" viewBox="0 0 5 3"><path d="M0 0 H5 L2.5 3 Z" fill="#8a8a8a"/></svg>
<div class="panel" style="left:1332px;top:502px;"></div>
<div class="t" style="left:1348.50px;top:513.50px;font-size:19px;line-height:21px;color:#d2d2d2;transform:scaleX(1.1584);-webkit-text-stroke:0.45px #121212;">Unique error event types</div>
<svg style="left:1801.80px;top:516.10px" width="16" height="16" viewBox="0 0 16 16"><path d="M6.64 3.09 L6.92 0.78 L9.08 0.78 L9.36 3.09 L10.51 3.56 L12.34 2.13 L13.87 3.66 L12.44 5.49 L12.91 6.64 L15.22 6.92 L15.22 9.08 L12.91 9.36 L12.44 10.51 L13.87 12.34 L12.34 13.87 L10.51 12.44 L9.36 12.91 L9.08 15.22 L6.92 15.22 L6.64 12.91 L5.49 12.44 L3.66 13.87 L2.13 12.34 L3.56 10.51 L3.09 9.36 L0.78 9.08 L0.78 6.92 L3.09 6.64 L3.56 5.49 L2.13 3.66 L3.66 2.13 L5.49 3.56 Z M6.10 8.00 A1.9 1.9 0 1 0 9.90 8.00 A1.9 1.9 0 1 0 6.10 8.00 Z" fill="#f0f0f0" fill-rule="evenodd" stroke="#f0f0f0" stroke-width="0.5" stroke-linejoin="round"/></svg><svg style="left:1817.40px;top:523.10px" width="5" height="3" viewBox="0 0 5 3"><path d="M0 0 H5 L2.5 3 Z" fill="#8a8a8a"/></svg>
<div class="panel" style="left:311px;top:720px;"></div>
<div class="t" style="left:328.00px;top:731.50px;font-size:19px;line-height:21px;color:#d2d2d2;transform:scaleX(1.1511);-webkit-text-stroke:0.45px #121212;">Number of exception events by hostname</div>
<svg style="left:780.80px;top:734.10px" width="16" height="16" viewBox="0 0 16 16"><path d="M6.64 3.09 L6.92 0.78 L9.08 0.78 L9.36 3.09 L10.51 3.56 L12.34 2.13 L13.87 3.66 L12.44 5.49 L12.91 6.64 L15.22 6.92 L15.22 9.08 L12.91 9.36 L12.44 10.51 L13.87 12.34 L12.34 13.87 L10.51 12.44 L9.36 12.91 L9.08 15.22 L6.92 15.22 L6.64 12.91 L5.49 12.44 L3.66 13.87 L2.13 12.34 L3.56 10.51 L3.09 9.36 L0.78 9.08 L0.78 6.92 L3.09 6.64 L3.56 5.49 L2.13 3.66 L3.66 2.13 L5.49 3.56 Z M6.10 8.00 A1.9 1.9 0 1 0 9.90 8.00 A1.9 1.9 0 1 0 6.10 8.00 Z" fill="#f0f0f0" fill-rule="evenodd" stroke="#f0f0f0" stroke-width="0.5" stroke-linejoin="round"/></svg><svg style="left:796.40px;top:741.10px" width="5" height="3" viewBox="0 0 5 3"><path d="M0 0 H5 L2.5 3 Z" fill="#8a8a8a"/></svg>
<div class="panel" style="left:821px;top:720px;"></div>
<div class="t" style="left:838.00px;top:731.50px;font-size:19px;line-height:21px;color:#d2d2d2;transform:scaleX(1.1551);-webkit-text-stroke:0.45px #121212;">Number of exception events over time</div>
<svg style="left:1290.80px;top:734.10px" width="16" height="16" viewBox="0 0 16 16"><path d="M6.64 3.09 L6.92 0.78 L9.08 0.78 L9.36 3.09 L10.51 3.56 L12.34 2.13 L13.87 3.66 L12.44 5.49 L12.91 6.64 L15.22 6.92 L15.22 9.08 L12.91 9.36 L12.44 10.51 L13.87 12.34 L12.34 13.87 L10.51 12.44 L9.36 12.91 L9.08 15.22 L6.92 15.22 L6.64 12.91 L5.49 12.44 L3.66 13.87 L2.13 12.34 L3.56 10.51 L3.09 9.36 L0.78 9.08 L0.78 6.92 L3.09 6.64 L3.56 5.49 L2.13 3.66 L3.66 2.13 L5.49 3.56 Z M6.10 8.00 A1.9 1.9 0 1 0 9.90 8.00 A1.9 1.9 0 1 0 6.10 8.00 Z" fill="#f0f0f0" fill-rule="evenodd" stroke="#f0f0f0" stroke-width="0.5" stroke-linejoin="round"/></svg><svg style="left:1306.40px;top:741.10px" width="5" height="3" viewBox="0 0 5 3"><path d="M0 0 H5 L2.5 3 Z" fill="#8a8a8a"/></svg>
<div class="panel" style="left:1332px;top:720px;"></div>
<div class="t" style="left:1348.50px;top:731.50px;font-size:19px;line-height:21px;color:#d2d2d2;transform:scaleX(1.1545);-webkit-text-stroke:0.45px #121212;">Unique exception event types</div>
<svg style="left:1801.80px;top:734.10px" width="16" height="16" viewBox="0 0 16 16"><path d="M6.64 3.09 L6.92 0.78 L9.08 0.78 L9.36 3.09 L10.51 3.56 L12.34 2.13 L13.87 3.66 L12.44 5.49 L12.91 6.64 L15.22 6.92 L15.22 9.08 L12.91 9.36 L12.44 10.51 L13.87 12.34 L12.34 13.87 L10.51 12.44 L9.36 12.91 L9.08 15.22 L6.92 15.22 L6.64 12.91 L5.49 12.44 L3.66 13.87 L2.13 12.34 L3.56 10.51 L3.09 9.36 L0.78 9.08 L0.78 6.92 L3.09 6.64 L3.56 5.49 L2.13 3.66 L3.66 2.13 L5.49 3.56 Z M6.10 8.00 A1.9 1.9 0 1 0 9.90 8.00 A1.9 1.9 0 1 0 6.10 8.00 Z" fill="#f0f0f0" fill-rule="evenodd" stroke="#f0f0f0" stroke-width="0.5" stroke-linejoin="round"/></svg><svg style="left:1817.40px;top:741.10px" width="5" height="3" viewBox="0 0 5 3"><path d="M0 0 H5 L2.5 3 Z" fill="#8a8a8a"/></svg>
<div class="panel" style="left:311px;top:938px;"></div>
<div class="t" style="left:328.00px;top:949.50px;font-size:19px;line-height:21px;color:#d2d2d2;transform:scaleX(1.1488);-webkit-text-stroke:0.45px #121212;">Number of warning events by hostname</div>
<svg style="left:780.80px;top:952.10px" width="16" height="16" viewBox="0 0 16 16"><path d="M6.64 3.09 L6.92 0.78 L9.08 0.78 L9.36 3.09 L10.51 3.56 L12.34 2.13 L13.87 3.66 L12.44 5.49 L12.91 6.64 L15.22 6.92 L15.22 9.08 L12.91 9.36 L12.44 10.51 L13.87 12.34 L12.34 13.87 L10.51 12.44 L9.36 12.91 L9.08 15.22 L6.92 15.22 L6.64 12.91 L5.49 12.44 L3.66 13.87 L2.13 12.34 L3.56 10.51 L3.09 9.36 L0.78 9.08 L0.78 6.92 L3.09 6.64 L3.56 5.49 L2.13 3.66 L3.66 2.13 L5.49 3.56 Z M6.10 8.00 A1.9 1.9 0 1 0 9.90 8.00 A1.9 1.9 0 1 0 6.10 8.00 Z" fill="#f0f0f0" fill-rule="evenodd" stroke="#f0f0f0" stroke-width="0.5" stroke-linejoin="round"/></svg><svg style="left:796.40px;top:959.10px" width="5" height="3" viewBox="0 0 5 3"><path d="M0 0 H5 L2.5 3 Z" fill="#8a8a8a"/></svg>
<div class="panel" style="left:821px;top:938px;"></div>
<div class="t" style="left:838.00px;top:949.50px;font-size:19px;line-height:21px;color:#d2d2d2;transform:scaleX(1.1521);-webkit-text-stroke:0.45px #121212;">Number of warning events over time</div>
<svg style="left:1290.80px;top:952.10px" width="16" height="16" viewBox="0 0 16 16"><path d="M6.64 3.09 L6.92 0.78 L9.08 0.78 L9.36 3.09 L10.51 3.56 L12.34 2.13 L13.87 3.66 L12.44 5.49 L12.91 6.64 L15.22 6.92 L15.22 9.08 L12.91 9.36 L12.44 10.51 L13.87 12.34 L12.34 13.87 L10.51 12.44 L9.36 12.91 L9.08 15.22 L6.92 15.22 L6.64 12.91 L5.49 12.44 L3.66 13.87 L2.13 12.34 L3.56 10.51 L3.09 9.36 L0.78 9.08 L0.78 6.92 L3.09 6.64 L3.56 5.49 L2.13 3.66 L3.66 2.13 L5.49 3.56 Z M6.10 8.00 A1.9 1.9 0 1 0 9.90 8.00 A1.9 1.9 0 1 0 6.10 8.00 Z" fill="#f0f0f0" fill-rule="evenodd" stroke="#f0f0f0" stroke-width="0.5" stroke-linejoin="round"/></svg><svg style="left:1306.40px;top:959.10px" width="5" height="3" viewBox="0 0 5 3"><path d="M0 0 H5 L2.5 3 Z" fill="#8a8a8a"/></svg>
<div class="panel" style="left:1332px;top:938px;"></div>
<div class="t" style="left:1348.50px;top:949.50px;font-size:19px;line-height:21px;color:#d2d2d2;transform:scaleX(1.1511);-webkit-text-stroke:0.45px #121212;">Unique warning event types</div>
<svg style="left:1801.80px;top:952.10px" width="16" height="16" viewBox="0 0 16 16"><path d="M6.64 3.09 L6.92 0.78 L9.08 0.78 L9.36 3.09 L10.51 3.56 L12.34 2.13 L13.87 3.66 L12.44 5.49 L12.91 6.64 L15.22 6.92 L15.22 9.08 L12.91 9.36 L12.44 10.51 L13.87 12.34 L12.34 13.87 L10.51 12.44 L9.36 12.91 L9.08 15.22 L6.92 15.22 L6.64 12.91 L5.49 12.44 L3.66 13.87 L2.13 12.34 L3.56 10.51 L3.09 9.36 L0.78 9.08 L0.78 6.92 L3.09 6.64 L3.56 5.49 L2.13 3.66 L3.66 2.13 L5.49 3.56 Z M6.10 8.00 A1.9 1.9 0 1 0 9.90 8.00 A1.9 1.9 0 1 0 6.10 8.00 Z" fill="#f0f0f0" fill-rule="evenodd" stroke="#f0f0f0" stroke-width="0.5" stroke-linejoin="round"/></svg><svg style="left:1817.40px;top:959.10px" width="5" height="3" viewBox="0 0 5 3"><path d="M0 0 H5 L2.5 3 Z" fill="#8a8a8a"/></svg>
<svg style="left:0;top:0" width="1884" height="1086" viewBox="0 0 1884 1086"><g transform="translate(0,0)" fill="#f0f0f0"><rect x="744" y="310.1" width="3" height="3"/><rect x="748.1" y="308.1" width="3" height="5"/><rect x="752.2" y="305.3" width="3" height="7.8"/><path d="M751.6 302.9 L746.6 298.6 L746.6 300.9 C743 301.2 740.9 304 741.3 308.6 C742.3 306.2 743.8 305 746.6 304.9 L746.6 307.2 Z"/></g><text x="765.3" y="313.3" font-size="17.4" font-weight="700" font-style="italic" fill="#f0f0f0" stroke="#f0f0f0" stroke-width="0.4" style="font-family:&quot;Liberation Serif&quot;,serif">i</text>
<g transform="translate(510,0)" fill="#f0f0f0"><rect x="744" y="310.1" width="3" height="3"/><rect x="748.1" y="308.1" width="3" height="5"/><rect x="752.2" y="305.3" width="3" height="7.8"/><path d="M751.6 302.9 L746.6 298.6 L746.6 300.9 C743 301.2 740.9 304 741.3 308.6 C742.3 306.2 743.8 305 746.6 304.9 L746.6 307.2 Z"/></g><text x="1275.3" y="313.3" font-size="17.4" font-weight="700" font-style="italic" fill="#f0f0f0" stroke="#f0f0f0" stroke-width="0.4" style="font-family:&quot;Liberation Serif&quot;,serif">i</text>
<g transform="translate(1021,0)" fill="#f0f0f0"><rect x="744" y="310.1" width="3" height="3"/><rect x="748.1" y="308.1" width="3" height="5"/><rect x="752.2" y="305.3" width="3" height="7.8"/><path d="M751.6 302.9 L746.6 298.6 L746.6 300.9 C743 301.2 740.9 304 741.3 308.6 C742.3 306.2 743.8 305 746.6 304.9 L746.6 307.2 Z"/></g><text x="1786.3" y="313.3" font-size="17.4" font-weight="700" font-style="italic" fill="#f0f0f0" stroke="#f0f0f0" stroke-width="0.4" style="font-family:&quot;Liberation Serif&quot;,serif">i</text>
<g transform="translate(0,218)" fill="#f0f0f0"><rect x="744" y="310.1" width="3" height="3"/><rect x="748.1" y="308.1" width="3" height="5"/><rect x="752.2" y="305.3" width="3" height="7.8"/><path d="M751.6 302.9 L746.6 298.6 L746.6 300.9 C743 301.2 740.9 304 741.3 308.6 C742.3 306.2 743.8 305 746.6 304.9 L746.6 307.2 Z"/></g><text x="765.3" y="531.3" font-size="17.4" font-weight="700" font-style="italic" fill="#f0f0f0" stroke="#f0f0f0" stroke-width="0.4" style="font-family:&quot;Liberation Serif&quot;,serif">i</text>
<g transform="translate(510,218)" fill="#f0f0f0"><rect x="744" y="310.1" width="3" height="3"/><rect x="748.1" y="308.1" width="3" height="5"/><rect x="752.2" y="305.3" width="3" height="7.8"/><path d="M751.6 302.9 L746.6 298.6 L746.6 300.9 C743 301.2 740.9 304 741.3 308.6 C742.3 306.2 743.8 305 746.6 304.9 L746.6 307.2 Z"/></g><text x="1275.3" y="531.3" font-size="17.4" font-weight="700" font-style="italic" fill="#f0f0f0" stroke="#f0f0f0" stroke-width="0.4" style="font-family:&quot;Liberation Serif&quot;,serif">i</text>
<g transform="translate(1021,218)" fill="#f0f0f0"><rect x="744" y="310.1" width="3" height="3"/><rect x="748.1" y="308.1" width="3" height="5"/><rect x="752.2" y="305.3" width="3" height="7.8"/><path d="M751.6 302.9 L746.6 298.6 L746.6 300.9 C743 301.2 740.9 304 741.3 308.6 C742.3 306.2 743.8 305 746.6 304.9 L746.6 307.2 Z"/></g><text x="1786.3" y="531.3" font-size="17.4" font-weight="700" font-style="italic" fill="#f0f0f0" stroke="#f0f0f0" stroke-width="0.4" style="font-family:&quot;Liberation Serif&quot;,serif">i</text>
<g transform="translate(0,436)" fill="#f0f0f0"><rect x="744" y="310.1" width="3" height="3"/><rect x="748.1" y="308.1" width="3" height="5"/><rect x="752.2" y="305.3" width="3" height="7.8"/><path d="M751.6 302.9 L746.6 298.6 L746.6 300.9 C743 301.2 740.9 304 741.3 308.6 C742.3 306.2 743.8 305 746.6 304.9 L746.6 307.2 Z"/></g><text x="765.3" y="749.3" font-size="17.4" font-weight="700" font-style="italic" fill="#f0f0f0" stroke="#f0f0f0" stroke-width="0.4" style="font-family:&quot;Liberation Serif&quot;,serif">i</text>
<g transform="translate(510,436)" fill="#f0f0f0"><rect x="744" y="310.1" width="3" height="3"/><rect x="748.1" y="308.1" width="3" height="5"/><rect x="752.2" y="305.3" width="3" height="7.8"/><path d="M751.6 302.9 L746.6 298.6 L746.6 300.9 C743 301.2 740.9 304 741.3 308.6 C742.3 306.2 743.8 305 746.6 304.9 L746.6 307.2 Z"/></g><text x="1275.3" y="749.3" font-size="17.4" font-weight="700" font-style="italic" fill="#f0f0f0" stroke="#f0f0f0" stroke-width="0.4" style="font-family:&quot;Liberation Serif&quot;,serif">i</text>
<g transform="translate(1021,436)" fill="#f0f0f0"><rect x="744" y="310.1" width="3" height="3"/><rect x="748.1" y="308.1" width="3" height="5"/><rect x="752.2" y="305.3" width="3" height="7.8"/><path d="M751.6 302.9 L746.6 298.6 L746.6 300.9 C743 301.2 740.9 304 741.3 308.6 C742.3 306.2 743.8 305 746.6 304.9 L746.6 307.2 Z"/></g><text x="1786.3" y="749.3" font-size="17.4" font-weight="700" font-style="italic" fill="#f0f0f0" stroke="#f0f0f0" stroke-width="0.4" style="font-family:&quot;Liberation Serif&quot;,serif">i</text>
<g transform="translate(0,654)" fill="#f0f0f0"><rect x="744" y="310.1" width="3" height="3"/><rect x="748.1" y="308.1" width="3" height="5"/><rect x="752.2" y="305.3" width="3" height="7.8"/><path d="M751.6 302.9 L746.6 298.6 L746.6 300.9 C743 301.2 740.9 304 741.3 308.6 C742.3 306.2 743.8 305 746.6 304.9 L746.6 307.2 Z"/></g><text x="765.3" y="967.3" font-size="17.4" font-weight="700" font-style="italic" fill="#f0f0f0" stroke="#f0f0f0" stroke-width="0.4" style="font-family:&quot;Liberation Serif&quot;,serif">i</text>
<g transform="translate(510,654)" fill="#f0f0f0"><rect x="744" y="310.1" width="3" height="3"/><rect x="748.1" y="308.1" width="3" height="5"/><rect x="752.2" y="305.3" width="3" height="7.8"/><path d="M751.6 302.9 L746.6 298.6 L746.6 300.9 C743 301.2 740.9 304 741.3 308.6 C742.3 306.2 743.8 305 746.6 304.9 L746.6 307.2 Z"/></g><text x="1275.3" y="967.3" font-size="17.4" font-weight="700" font-style="italic" fill="#f0f0f0" stroke="#f0f0f0" stroke-width="0.4" style="font-family:&quot;Liberation Serif&quot;,serif">i</text>
<g transform="translate(1021,654)" fill="#f0f0f0"><rect x="744" y="310.1" width="3" height="3"/><rect x="748.1" y="308.1" width="3" height="5"/><rect x="752.2" y="305.3" width="3" height="7.8"/><path d="M751.6 302.9 L746.6 298.6 L746.6 300.9 C743 301.2 740.9 304 741.3 308.6 C742.3 306.2 743.8 305 746.6 304.9 L746.6 307.2 Z"/></g><text x="1786.3" y="967.3" font-size="17.4" font-weight="700" font-style="italic" fill="#f0f0f0" stroke="#f0f0f0" stroke-width="0.4" style="font-family:&quot;Liberation Serif&quot;,serif">i</text>
<path d="M490.90 402.90 L490.90 329.70 A73.2 73.2 0 0 1 530.55 464.43 Z" fill="#416da9" stroke="#3a3340" stroke-opacity="0.3" stroke-width="0.5" stroke-linejoin="round"/>
<path d="M490.90 402.90 L530.55 464.43 A73.2 73.2 0 0 1 450.07 463.66 Z" fill="#69abb3" stroke="#3a3340" stroke-opacity="0.3" stroke-width="0.5" stroke-linejoin="round"/>
<path d="M490.90 402.90 L450.07 463.66 A73.2 73.2 0 0 1 418.54 391.83 Z" fill="#9a52d0" stroke="#3a3340" stroke-opacity="0.3" stroke-width="0.5" stroke-linejoin="round"/>
<path d="M490.90 402.90 L418.54 391.83 A73.2 73.2 0 0 1 451.46 341.23 Z" fill="#c489c4" stroke="#3a3340" stroke-opacity="0.3" stroke-width="0.5" stroke-linejoin="round"/>
<path d="M490.90 402.90 L451.46 341.23 A73.2 73.2 0 0 1 490.90 329.70 Z" fill="#ae2f39" stroke="#3a3340" stroke-opacity="0.3" stroke-width="0.5" stroke-linejoin="round"/>
<rect x="665.5" y="320.5" width="134" height="88.5" rx="3" fill="none" stroke="#3a3a3a" stroke-width="1"/>
<rect x="671" y="326.90" width="10" height="8" fill="#4e7cc0"/>
<text x="684.00" y="334.10" font-size="11" text-anchor="start" fill="#b6b6b6" font-weight="700" textLength="20.50" lengthAdjust="spacingAndGlyphs">esx1</text>
<rect x="671" y="342.90" width="10" height="8" fill="#69abb3"/>
<text x="684.00" y="350.10" font-size="11" text-anchor="start" fill="#b6b6b6" font-weight="700" textLength="22.50" lengthAdjust="spacingAndGlyphs">esx3</text>
<rect x="671" y="358.90" width="10" height="8" fill="#9747cf"/>
<text x="684.00" y="366.10" font-size="11" text-anchor="start" fill="#b6b6b6" font-weight="700" textLength="22.50" lengthAdjust="spacingAndGlyphs">esx2</text>
<rect x="671" y="374.90" width="10" height="8" fill="#c58ac5"/>
<text x="684.00" y="382.10" font-size="11" text-anchor="start" fill="#b6b6b6" font-weight="700" textLength="22.80" lengthAdjust="spacingAndGlyphs">esx4</text>
<rect x="671" y="390.90" width="10" height="8" fill="#d64c4f"/>
<text x="684.00" y="398.10" font-size="11" text-anchor="start" fill="#b6b6b6" font-weight="700" textLength="77.50" lengthAdjust="spacingAndGlyphs">esx5.cloud.local</text>
<path d="M490.90 620.90 L490.90 547.70 A73.2 73.2 0 0 1 562.05 603.69 Z" fill="#416da9" stroke="#3a3340" stroke-opacity="0.3" stroke-width="0.5" stroke-linejoin="round"/>
<path d="M490.90 620.90 L562.05 603.69 A73.2 73.2 0 0 1 525.72 685.29 Z" fill="#69abb3" stroke="#3a3340" stroke-opacity="0.3" stroke-width="0.5" stroke-linejoin="round"/>
<path d="M490.90 620.90 L525.72 685.29 A73.2 73.2 0 0 1 440.61 674.09 Z" fill="#9a52d0" stroke="#3a3340" stroke-opacity="0.3" stroke-width="0.5" stroke-linejoin="round"/>
<path d="M490.90 620.90 L440.61 674.09 A73.2 73.2 0 0 1 423.03 593.48 Z" fill="#c489c4" stroke="#3a3340" stroke-opacity="0.3" stroke-width="0.5" stroke-linejoin="round"/>
<path d="M490.90 620.90 L423.03 593.48 A73.2 73.2 0 0 1 490.90 547.70 Z" fill="#ae2f39" stroke="#3a3340" stroke-opacity="0.3" stroke-width="0.5" stroke-linejoin="round"/>
<rect x="665.5" y="538.5" width="134" height="88.5" rx="3" fill="none" stroke="#3a3a3a" stroke-width="1"/>
<rect x="671" y="544.90" width="10" height="8" fill="#4e7cc0"/>
<text x="684.00" y="552.10" font-size="11" text-anchor="start" fill="#b6b6b6" font-weight="700" textLength="22.80" lengthAdjust="spacingAndGlyphs">esx4</text>
<rect x="671" y="560.90" width="10" height="8" fill="#69abb3"/>
<text x="684.00" y="568.10" font-size="11" text-anchor="start" fill="#b6b6b6" font-weight="700" textLength="20.50" lengthAdjust="spacingAndGlyphs">esx1</text>
<rect x="671" y="576.90" width="10" height="8" fill="#9747cf"/>
<text x="684.00" y="584.10" font-size="11" text-anchor="start" fill="#b6b6b6" font-weight="700" textLength="22.50" lengthAdjust="spacingAndGlyphs">esx3</text>
<rect x="671" y="592.90" width="10" height="8" fill="#c58ac5"/>
<text x="684.00" y="600.10" font-size="11" text-anchor="start" fill="#b6b6b6" font-weight="700" textLength="77.50" lengthAdjust="spacingAndGlyphs">esx5.cloud.local</text>
<rect x="671" y="608.90" width="10" height="8" fill="#d64c4f"/>
<text x="684.00" y="616.10" font-size="11" text-anchor="start" fill="#b6b6b6" font-weight="700" textLength="22.50" lengthAdjust="spacingAndGlyphs">esx2</text>
<path d="M490.90 838.90 L490.90 765.70 A73.2 73.2 0 0 1 561.93 821.19 Z" fill="#416da9" stroke="#3a3340" stroke-opacity="0.3" stroke-width="0.5" stroke-linejoin="round"/>
<path d="M490.90 838.90 L561.93 821.19 A73.2 73.2 0 0 1 526.61 902.80 Z" fill="#69abb3" stroke="#3a3340" stroke-opacity="0.3" stroke-width="0.5" stroke-linejoin="round"/>
<path d="M490.90 838.90 L526.61 902.80 A73.2 73.2 0 0 1 437.45 888.92 Z" fill="#9a52d0" stroke="#3a3340" stroke-opacity="0.3" stroke-width="0.5" stroke-linejoin="round"/>
<path d="M490.90 838.90 L437.45 888.92 A73.2 73.2 0 0 1 423.52 810.30 Z" fill="#c489c4" stroke="#3a3340" stroke-opacity="0.3" stroke-width="0.5" stroke-linejoin="round"/>
<path d="M490.90 838.90 L423.52 810.30 A73.2 73.2 0 0 1 490.90 765.70 Z" fill="#ae2f39" stroke="#3a3340" stroke-opacity="0.3" stroke-width="0.5" stroke-linejoin="round"/>
<rect x="665.5" y="756.5" width="134" height="88.5" rx="3" fill="none" stroke="#3a3a3a" stroke-width="1"/>
<rect x="671" y="762.90" width="10" height="8" fill="#4e7cc0"/>
<text x="684.00" y="770.10" font-size="11" text-anchor="start" fill="#b6b6b6" font-weight="700" textLength="20.50" lengthAdjust="spacingAndGlyphs">esx1</text>
<rect x="671" y="778.90" width="10" height="8" fill="#69abb3"/>
<text x="684.00" y="786.10" font-size="11" text-anchor="start" fill="#b6b6b6" font-weight="700" textLength="22.50" lengthAdjust="spacingAndGlyphs">esx2</text>
<rect x="671" y="794.90" width="10" height="8" fill="#9747cf"/>
<text x="684.00" y="802.10" font-size="11" text-anchor="start" fill="#b6b6b6" font-weight="700" textLength="22.50" lengthAdjust="spacingAndGlyphs">esx3</text>
<rect x="671" y="810.90" width="10" height="8" fill="#c58ac5"/>
<text x="684.00" y="818.10" font-size="11" text-anchor="start" fill="#b6b6b6" font-weight="700" textLength="22.80" lengthAdjust="spacingAndGlyphs">esx4</text>
<rect x="671" y="826.90" width="10" height="8" fill="#d64c4f"/>
<text x="684.00" y="834.10" font-size="11" text-anchor="start" fill="#b6b6b6" font-weight="700" textLength="77.50" lengthAdjust="spacingAndGlyphs">esx5.cloud.local</text>
<path d="M490.90 1056.90 L490.90 983.70 A73.2 73.2 0 0 1 561.37 1076.71 Z" fill="#416da9" stroke="#3a3340" stroke-opacity="0.3" stroke-width="0.5" stroke-linejoin="round"/>
<path d="M490.90 1056.90 L561.37 1076.71 A73.2 73.2 0 0 1 490.90 1130.10 Z" fill="#69abb3" stroke="#3a3340" stroke-opacity="0.3" stroke-width="0.5" stroke-linejoin="round"/>
<path d="M490.90 1056.90 L490.90 1130.10 A73.2 73.2 0 0 1 422.38 1082.65 Z" fill="#9a52d0" stroke="#3a3340" stroke-opacity="0.3" stroke-width="0.5" stroke-linejoin="round"/>
<path d="M490.90 1056.90 L422.38 1082.65 A73.2 73.2 0 0 1 433.30 1011.73 Z" fill="#c489c4" stroke="#3a3340" stroke-opacity="0.3" stroke-width="0.5" stroke-linejoin="round"/>
<path d="M490.90 1056.90 L433.30 1011.73 A73.2 73.2 0 0 1 490.90 983.70 Z" fill="#ae2f39" stroke="#3a3340" stroke-opacity="0.3" stroke-width="0.5" stroke-linejoin="round"/>
<rect x="665.5" y="974.5" width="134" height="88.5" rx="3" fill="none" stroke="#3a3a3a" stroke-width="1"/>
<rect x="671" y="980.90" width="10" height="8" fill="#4e7cc0"/>
<text x="684.00" y="988.10" font-size="11" text-anchor="start" fill="#b6b6b6" font-weight="700" textLength="22.80" lengthAdjust="spacingAndGlyphs">esx4</text>
<rect x="671" y="996.90" width="10" height="8" fill="#69abb3"/>
<text x="684.00" y="1004.10" font-size="11" text-anchor="start" fill="#b6b6b6" font-weight="700" textLength="77.50" lengthAdjust="spacingAndGlyphs">esx5.cloud.local</text>
<rect x="671" y="1012.90" width="10" height="8" fill="#9747cf"/>
<text x="684.00" y="1020.10" font-size="11" text-anchor="start" fill="#b6b6b6" font-weight="700" textLength="20.50" lengthAdjust="spacingAndGlyphs">esx1</text>
<rect x="671" y="1028.90" width="10" height="8" fill="#c58ac5"/>
<text x="684.00" y="1036.10" font-size="11" text-anchor="start" fill="#b6b6b6" font-weight="700" textLength="22.50" lengthAdjust="spacingAndGlyphs">esx2</text>
<rect x="671" y="1044.90" width="10" height="8" fill="#d64c4f"/>
<text x="684.00" y="1052.10" font-size="11" text-anchor="start" fill="#b6b6b6" font-weight="700" textLength="22.50" lengthAdjust="spacingAndGlyphs">esx3</text>
<text x="854.20" y="457.20" font-size="8.2" text-anchor="end" fill="#c2c2c2" textLength="5.70" lengthAdjust="spacingAndGlyphs">0</text>
<path d="M869.0 414.5 H1310.0" stroke="#232323" stroke-width="1" fill="none"/>
<text x="854.20" y="415.57" font-size="8.2" text-anchor="end" fill="#c2c2c2" textLength="17.10" lengthAdjust="spacingAndGlyphs">500</text>
<path d="M869.0 372.5 H1310.0" stroke="#232323" stroke-width="1" fill="none"/>
<text x="854.20" y="373.33" font-size="8.2" text-anchor="end" fill="#c2c2c2" textLength="20.70" lengthAdjust="spacingAndGlyphs">1000</text>
<path d="M869.0 330.5 H1310.0" stroke="#232323" stroke-width="1" fill="none"/>
<text x="854.20" y="331.10" font-size="8.2" text-anchor="end" fill="#c2c2c2" textLength="20.70" lengthAdjust="spacingAndGlyphs">1500</text>
<clipPath id="clip01"><rect x="869.0" y="314" width="441.0" height="144.0"/></clipPath>
<g clip-path="url(#clip01)"><path d="M868.38 449.74 C868.38 449.74 872.76 446.41 875.69 438.76 C878.61 431.11 880.08 411.48 883.00 411.48 C885.92 411.48 887.39 436.99 890.31 436.99 C893.24 436.99 894.70 364.94 897.62 364.94 C900.55 364.94 902.01 369.23 904.94 384.70 C907.86 400.18 909.33 442.31 912.25 442.31 C915.17 442.31 916.64 442.31 919.56 435.13 C922.49 427.95 923.95 389.35 926.88 389.35 C929.80 389.35 931.26 437.58 934.19 437.58 C937.11 437.58 938.58 424.57 941.50 424.57 C944.42 424.57 945.89 437.44 948.81 442.31 C951.74 447.17 953.20 448.90 956.12 448.90 C959.05 448.90 960.51 447.51 963.44 444.17 C966.36 440.82 967.83 432.17 970.75 432.17 C973.67 432.17 975.14 439.35 978.06 439.35 C980.99 439.35 982.45 418.57 985.38 418.57 C988.30 418.57 989.76 445.35 992.69 445.35 C995.61 445.35 997.08 445.35 1000.00 445.35 C1002.92 445.35 1004.39 441.70 1007.31 439.94 C1010.24 438.19 1011.70 436.57 1014.62 436.57 C1017.55 436.57 1019.01 442.31 1021.94 442.31 C1024.86 442.31 1026.33 435.59 1029.25 431.58 C1032.17 427.58 1033.64 422.29 1036.56 422.29 C1039.49 422.29 1040.95 447.72 1043.88 447.72 C1046.80 447.72 1048.26 447.51 1051.19 445.35 C1054.11 443.19 1055.58 436.90 1058.50 436.90 C1061.42 436.90 1062.89 439.02 1065.81 439.02 C1068.74 439.02 1070.20 425.92 1073.12 425.92 C1076.05 425.92 1077.51 437.11 1080.44 442.31 C1083.36 447.51 1084.83 451.94 1087.75 451.94 C1090.67 451.94 1092.14 447.45 1095.06 444.76 C1097.99 442.07 1099.45 438.51 1102.38 438.51 C1105.30 438.51 1106.76 441.72 1109.69 441.72 C1112.61 441.72 1114.08 420.77 1117.00 420.77 C1119.92 420.77 1121.39 436.40 1124.31 441.46 C1127.24 446.53 1128.70 446.53 1131.62 446.53 C1134.55 446.53 1136.01 445.13 1138.94 444.17 C1141.86 443.20 1143.33 442.68 1146.25 441.72 C1149.17 440.76 1150.64 441.72 1153.56 439.35 C1156.49 436.99 1157.95 414.18 1160.88 414.18 C1163.80 414.18 1165.26 431.33 1168.19 438.59 C1171.11 445.86 1172.58 450.50 1175.50 450.50 C1178.42 450.50 1179.89 449.42 1182.81 442.99 C1185.74 436.55 1187.20 418.32 1190.12 418.32 C1193.05 418.32 1194.51 445.94 1197.44 445.94 C1200.36 445.94 1201.83 428.54 1204.75 428.54 C1207.67 428.54 1209.14 438.31 1212.06 442.31 C1214.99 446.31 1216.45 448.56 1219.38 448.56 C1222.30 448.56 1223.76 447.12 1226.69 445.35 C1229.61 443.58 1231.08 439.69 1234.00 439.69 C1236.92 439.69 1238.39 442.31 1241.31 442.31 C1244.24 442.31 1245.70 423.47 1248.62 423.47 C1251.55 423.47 1253.01 437.09 1255.94 442.31 C1258.86 447.53 1260.33 449.57 1263.25 449.57 C1266.17 449.57 1267.64 445.55 1270.56 442.31 C1273.49 439.07 1274.95 433.36 1277.88 433.36 C1280.80 433.36 1282.26 445.94 1285.19 445.94 C1288.11 445.94 1289.58 424.32 1292.50 424.32 C1295.42 424.32 1296.89 430.79 1299.81 436.31 C1302.74 441.84 1307.12 451.94 1307.12 451.94 L1307.12 456.50 L868.38 456.50 Z" fill="#3c659d" stroke="none"/><path d="M868.38 449.74 C868.38 449.74 872.76 446.41 875.69 438.76 C878.61 431.11 880.08 411.48 883.00 411.48 C885.92 411.48 887.39 436.99 890.31 436.99 C893.24 436.99 894.70 364.94 897.62 364.94 C900.55 364.94 902.01 369.23 904.94 384.70 C907.86 400.18 909.33 442.31 912.25 442.31 C915.17 442.31 916.64 442.31 919.56 435.13 C922.49 427.95 923.95 389.35 926.88 389.35 C929.80 389.35 931.26 437.58 934.19 437.58 C937.11 437.58 938.58 424.57 941.50 424.57 C944.42 424.57 945.89 437.44 948.81 442.31 C951.74 447.17 953.20 448.90 956.12 448.90 C959.05 448.90 960.51 447.51 963.44 444.17 C966.36 440.82 967.83 432.17 970.75 432.17 C973.67 432.17 975.14 439.35 978.06 439.35 C980.99 439.35 982.45 418.57 985.38 418.57 C988.30 418.57 989.76 445.35 992.69 445.35 C995.61 445.35 997.08 445.35 1000.00 445.35 C1002.92 445.35 1004.39 441.70 1007.31 439.94 C1010.24 438.19 1011.70 436.57 1014.62 436.57 C1017.55 436.57 1019.01 442.31 1021.94 442.31 C1024.86 442.31 1026.33 435.59 1029.25 431.58 C1032.17 427.58 1033.64 422.29 1036.56 422.29 C1039.49 422.29 1040.95 447.72 1043.88 447.72 C1046.80 447.72 1048.26 447.51 1051.19 445.35 C1054.11 443.19 1055.58 436.90 1058.50 436.90 C1061.42 436.90 1062.89 439.02 1065.81 439.02 C1068.74 439.02 1070.20 425.92 1073.12 425.92 C1076.05 425.92 1077.51 437.11 1080.44 442.31 C1083.36 447.51 1084.83 451.94 1087.75 451.94 C1090.67 451.94 1092.14 447.45 1095.06 444.76 C1097.99 442.07 1099.45 438.51 1102.38 438.51 C1105.30 438.51 1106.76 441.72 1109.69 441.72 C1112.61 441.72 1114.08 420.77 1117.00 420.77 C1119.92 420.77 1121.39 436.40 1124.31 441.46 C1127.24 446.53 1128.70 446.53 1131.62 446.53 C1134.55 446.53 1136.01 445.13 1138.94 444.17 C1141.86 443.20 1143.33 442.68 1146.25 441.72 C1149.17 440.76 1150.64 441.72 1153.56 439.35 C1156.49 436.99 1157.95 414.18 1160.88 414.18 C1163.80 414.18 1165.26 431.33 1168.19 438.59 C1171.11 445.86 1172.58 450.50 1175.50 450.50 C1178.42 450.50 1179.89 449.42 1182.81 442.99 C1185.74 436.55 1187.20 418.32 1190.12 418.32 C1193.05 418.32 1194.51 445.94 1197.44 445.94 C1200.36 445.94 1201.83 428.54 1204.75 428.54 C1207.67 428.54 1209.14 438.31 1212.06 442.31 C1214.99 446.31 1216.45 448.56 1219.38 448.56 C1222.30 448.56 1223.76 447.12 1226.69 445.35 C1229.61 443.58 1231.08 439.69 1234.00 439.69 C1236.92 439.69 1238.39 442.31 1241.31 442.31 C1244.24 442.31 1245.70 423.47 1248.62 423.47 C1251.55 423.47 1253.01 437.09 1255.94 442.31 C1258.86 447.53 1260.33 449.57 1263.25 449.57 C1266.17 449.57 1267.64 445.55 1270.56 442.31 C1273.49 439.07 1274.95 433.36 1277.88 433.36 C1280.80 433.36 1282.26 445.94 1285.19 445.94 C1288.11 445.94 1289.58 424.32 1292.50 424.32 C1295.42 424.32 1296.89 430.79 1299.81 436.31 C1302.74 441.84 1307.12 451.94 1307.12 451.94" fill="none" stroke="#4a86d6" stroke-width="1.9" stroke-linejoin="round" stroke-linecap="round"/><path d="M869.00 427.36 L1308.00 444.51" stroke="#7ddbe1" stroke-width="2.2" fill="none" stroke-linecap="butt"/></g>
<path d="M869.0 456.5 H1310.0" stroke="#e4e4e4" stroke-width="1.4" fill="none"/>
<path d="M941.5 456.5 V462.0" stroke="#e4e4e4" stroke-width="1.2" fill="none"/>
<text x="941.50" y="470.90" font-size="8" text-anchor="middle" fill="#c2c2c2" textLength="25.20" lengthAdjust="spacingAndGlyphs">07:04</text>
<path d="M1029.5 456.5 V462.0" stroke="#e4e4e4" stroke-width="1.2" fill="none"/>
<text x="1029.25" y="470.90" font-size="8" text-anchor="middle" fill="#c2c2c2" textLength="25.20" lengthAdjust="spacingAndGlyphs">07:05</text>
<path d="M1117.5 456.5 V462.0" stroke="#e4e4e4" stroke-width="1.2" fill="none"/>
<text x="1117.00" y="470.90" font-size="8" text-anchor="middle" fill="#c2c2c2" textLength="25.20" lengthAdjust="spacingAndGlyphs">07:06</text>
<path d="M1204.5 456.5 V462.0" stroke="#e4e4e4" stroke-width="1.2" fill="none"/>
<text x="1204.75" y="470.90" font-size="8" text-anchor="middle" fill="#c2c2c2" textLength="25.20" lengthAdjust="spacingAndGlyphs">07:07</text>
<path d="M1292.5 456.5 V462.0" stroke="#e4e4e4" stroke-width="1.2" fill="none"/>
<text x="1292.50" y="470.90" font-size="8" text-anchor="middle" fill="#c2c2c2" textLength="25.20" lengthAdjust="spacingAndGlyphs">07:08</text>
<text x="1358.50" y="457.20" font-size="8.2" text-anchor="end" fill="#c2c2c2" textLength="5.70" lengthAdjust="spacingAndGlyphs">0</text>
<path d="M1373.6 393.5 H1820.9" stroke="#232323" stroke-width="1" fill="none"/>
<text x="1358.50" y="394.30" font-size="8.2" text-anchor="end" fill="#c2c2c2" textLength="15.00" lengthAdjust="spacingAndGlyphs">100</text>
<path d="M1373.6 329.5 H1820.9" stroke="#232323" stroke-width="1" fill="none"/>
<text x="1358.50" y="330.80" font-size="8.2" text-anchor="end" fill="#c2c2c2" textLength="17.10" lengthAdjust="spacingAndGlyphs">200</text>
<clipPath id="clip02"><rect x="1373.6" y="314" width="447.3" height="144.0"/></clipPath>
<g clip-path="url(#clip02)"><path d="M1373.12 437.83 C1373.12 437.83 1377.56 437.65 1380.53 431.74 C1383.49 425.82 1384.97 408.24 1387.93 408.24 C1390.90 408.24 1392.38 429.19 1395.34 429.19 C1398.30 429.19 1399.79 371.41 1402.75 371.41 C1405.71 371.41 1407.20 406.97 1410.16 414.59 C1413.12 422.21 1414.60 420.31 1417.57 422.21 C1420.53 424.11 1422.01 424.12 1424.98 424.12 C1427.94 424.12 1429.42 367.60 1432.38 367.60 C1435.35 367.60 1436.83 427.93 1439.79 427.93 C1442.75 427.93 1444.24 413.95 1447.20 413.95 C1450.16 413.95 1451.64 436.37 1454.61 440.31 C1457.57 444.24 1459.05 444.24 1462.02 444.24 C1464.98 444.24 1466.46 444.24 1469.42 437.45 C1472.39 430.66 1473.87 398.71 1476.83 398.71 C1479.80 398.71 1481.28 427.29 1484.24 427.29 C1487.21 427.29 1488.69 405.70 1491.65 405.70 C1494.61 405.70 1496.10 443.99 1499.06 443.99 C1502.02 443.99 1503.50 443.14 1506.47 439.67 C1509.43 436.21 1510.91 432.05 1513.88 426.65 C1516.84 421.26 1518.32 412.69 1521.28 412.69 C1524.25 412.69 1525.73 431.10 1528.69 431.10 C1531.65 431.10 1533.14 419.67 1536.10 419.67 C1539.06 419.67 1540.55 429.25 1543.51 433.00 C1546.47 436.76 1547.95 438.47 1550.92 438.47 C1553.88 438.47 1555.36 438.47 1558.33 437.45 C1561.29 436.43 1562.77 424.12 1565.73 424.12 C1568.70 424.12 1570.18 426.65 1573.14 426.65 C1576.11 426.65 1577.59 419.67 1580.55 419.67 C1583.51 419.67 1585.00 431.57 1587.96 436.18 C1590.92 440.79 1592.40 442.72 1595.37 442.72 C1598.33 442.72 1599.81 430.68 1602.78 426.15 C1605.74 421.61 1607.22 422.58 1610.18 420.05 C1613.15 417.52 1614.63 415.36 1617.59 413.51 C1620.55 411.66 1622.04 410.78 1625.00 410.78 C1627.96 410.78 1629.45 433.13 1632.41 433.13 C1635.37 433.13 1636.85 433.13 1639.82 433.13 C1642.78 433.13 1644.26 435.99 1647.23 435.99 C1650.19 435.99 1651.67 434.85 1654.63 433.00 C1657.60 431.16 1659.08 431.61 1662.04 426.78 C1665.00 421.96 1666.49 408.88 1669.45 408.88 C1672.41 408.88 1673.89 424.97 1676.86 430.46 C1679.82 435.96 1681.30 436.12 1684.27 436.37 C1687.23 436.62 1688.71 436.62 1691.68 436.62 C1694.64 436.62 1696.12 413.51 1699.08 413.51 C1702.05 413.51 1703.53 433.00 1706.49 433.00 C1709.46 433.00 1710.94 417.13 1713.90 417.13 C1716.86 417.13 1718.35 425.72 1721.31 430.46 C1724.27 435.21 1725.75 440.88 1728.72 440.88 C1731.68 440.88 1733.16 440.31 1736.12 436.62 C1739.09 432.94 1740.57 422.46 1743.53 422.46 C1746.50 422.46 1747.98 429.83 1750.94 429.83 C1753.90 429.83 1755.39 419.16 1758.35 419.16 C1761.31 419.16 1762.80 440.62 1765.76 440.62 C1768.72 440.62 1770.20 435.04 1773.17 433.13 C1776.13 431.23 1777.61 433.13 1780.58 431.10 C1783.54 429.07 1785.02 410.14 1787.98 410.14 C1790.95 410.14 1792.43 431.74 1795.39 431.74 C1798.36 431.74 1799.84 413.00 1802.80 413.00 C1805.76 413.00 1807.25 413.00 1810.21 419.67 C1813.17 426.34 1817.62 453.96 1817.62 453.96" fill="none" stroke="#4a86d6" stroke-width="2.1" stroke-linejoin="round" stroke-linecap="round"/><g fill="#4a86d6"><circle cx="1373.12" cy="437.83" r="1.5"/><circle cx="1380.53" cy="431.74" r="1.5"/><circle cx="1387.93" cy="408.24" r="1.5"/><circle cx="1395.34" cy="429.19" r="1.5"/><circle cx="1402.75" cy="371.41" r="1.5"/><circle cx="1410.16" cy="414.59" r="1.5"/><circle cx="1417.57" cy="422.21" r="1.5"/><circle cx="1424.98" cy="424.12" r="1.5"/><circle cx="1432.38" cy="367.60" r="1.5"/><circle cx="1439.79" cy="427.93" r="1.5"/><circle cx="1447.20" cy="413.95" r="1.5"/><circle cx="1454.61" cy="440.31" r="1.5"/><circle cx="1462.02" cy="444.24" r="1.5"/><circle cx="1469.42" cy="437.45" r="1.5"/><circle cx="1476.83" cy="398.71" r="1.5"/><circle cx="1484.24" cy="427.29" r="1.5"/><circle cx="1491.65" cy="405.70" r="1.5"/><circle cx="1499.06" cy="443.99" r="1.5"/><circle cx="1506.47" cy="439.67" r="1.5"/><circle cx="1513.88" cy="426.65" r="1.5"/><circle cx="1521.28" cy="412.69" r="1.5"/><circle cx="1528.69" cy="431.10" r="1.5"/><circle cx="1536.10" cy="419.67" r="1.5"/><circle cx="1543.51" cy="433.00" r="1.5"/><circle cx="1550.92" cy="438.47" r="1.5"/><circle cx="1558.33" cy="437.45" r="1.5"/><circle cx="1565.73" cy="424.12" r="1.5"/><circle cx="1573.14" cy="426.65" r="1.5"/><circle cx="1580.55" cy="419.67" r="1.5"/><circle cx="1587.96" cy="436.18" r="1.5"/><circle cx="1595.37" cy="442.72" r="1.5"/><circle cx="1602.78" cy="426.15" r="1.5"/><circle cx="1610.18" cy="420.05" r="1.5"/><circle cx="1617.59" cy="413.51" r="1.5"/><circle cx="1625.00" cy="410.78" r="1.5"/><circle cx="1632.41" cy="433.13" r="1.5"/><circle cx="1639.82" cy="433.13" r="1.5"/><circle cx="1647.23" cy="435.99" r="1.5"/><circle cx="1654.63" cy="433.00" r="1.5"/><circle cx="1662.04" cy="426.78" r="1.5"/><circle cx="1669.45" cy="408.88" r="1.5"/><circle cx="1676.86" cy="430.46" r="1.5"/><circle cx="1684.27" cy="436.37" r="1.5"/><circle cx="1691.68" cy="436.62" r="1.5"/><circle cx="1699.08" cy="413.51" r="1.5"/><circle cx="1706.49" cy="433.00" r="1.5"/><circle cx="1713.90" cy="417.13" r="1.5"/><circle cx="1721.31" cy="430.46" r="1.5"/><circle cx="1728.72" cy="440.88" r="1.5"/><circle cx="1736.12" cy="436.62" r="1.5"/><circle cx="1743.53" cy="422.46" r="1.5"/><circle cx="1750.94" cy="429.83" r="1.5"/><circle cx="1758.35" cy="419.16" r="1.5"/><circle cx="1765.76" cy="440.62" r="1.5"/><circle cx="1773.17" cy="433.13" r="1.5"/><circle cx="1780.58" cy="431.10" r="1.5"/><circle cx="1787.98" cy="410.14" r="1.5"/><circle cx="1795.39" cy="431.74" r="1.5"/><circle cx="1802.80" cy="413.00" r="1.5"/><circle cx="1810.21" cy="419.67" r="1.5"/><circle cx="1817.62" cy="453.96" r="1.5"/></g></g>
<path d="M1373.6 456.5 H1820.9" stroke="#e4e4e4" stroke-width="1.4" fill="none"/>
<path d="M1447.5 456.5 V462.0" stroke="#e4e4e4" stroke-width="1.2" fill="none"/>
<text x="1447.20" y="470.90" font-size="8" text-anchor="middle" fill="#c2c2c2" textLength="25.20" lengthAdjust="spacingAndGlyphs">07:04</text>
<path d="M1536.5 456.5 V462.0" stroke="#e4e4e4" stroke-width="1.2" fill="none"/>
<text x="1536.10" y="470.90" font-size="8" text-anchor="middle" fill="#c2c2c2" textLength="25.20" lengthAdjust="spacingAndGlyphs">07:05</text>
<path d="M1625.5 456.5 V462.0" stroke="#e4e4e4" stroke-width="1.2" fill="none"/>
<text x="1625.00" y="470.90" font-size="8" text-anchor="middle" fill="#c2c2c2" textLength="25.20" lengthAdjust="spacingAndGlyphs">07:06</text>
<path d="M1713.5 456.5 V462.0" stroke="#e4e4e4" stroke-width="1.2" fill="none"/>
<text x="1713.90" y="470.90" font-size="8" text-anchor="middle" fill="#c2c2c2" textLength="25.20" lengthAdjust="spacingAndGlyphs">07:07</text>
<path d="M1802.5 456.5 V462.0" stroke="#e4e4e4" stroke-width="1.2" fill="none"/>
<text x="1802.80" y="470.90" font-size="8" text-anchor="middle" fill="#c2c2c2" textLength="25.20" lengthAdjust="spacingAndGlyphs">07:08</text>
<text x="841.30" y="675.20" font-size="8.2" text-anchor="end" fill="#c2c2c2" textLength="5.70" lengthAdjust="spacingAndGlyphs">0</text>
<path d="M856.2 632.5 H1310.0" stroke="#232323" stroke-width="1" fill="none"/>
<text x="841.30" y="633.47" font-size="8.2" text-anchor="end" fill="#c2c2c2" textLength="9.30" lengthAdjust="spacingAndGlyphs">10</text>
<path d="M856.2 590.5 H1310.0" stroke="#232323" stroke-width="1" fill="none"/>
<text x="841.30" y="591.13" font-size="8.2" text-anchor="end" fill="#c2c2c2" textLength="11.40" lengthAdjust="spacingAndGlyphs">20</text>
<path d="M856.2 547.5 H1310.0" stroke="#232323" stroke-width="1" fill="none"/>
<text x="841.30" y="548.80" font-size="8.2" text-anchor="end" fill="#c2c2c2" textLength="11.40" lengthAdjust="spacingAndGlyphs">30</text>
<clipPath id="clip11"><rect x="856.2" y="532" width="453.8" height="144.0"/></clipPath>
<g clip-path="url(#clip11)"><path d="M855.25 643.60 C855.25 643.60 859.76 648.68 862.77 648.68 C865.78 648.68 867.29 622.85 870.30 622.85 C873.31 622.85 874.82 657.14 877.83 657.14 C880.84 657.14 882.34 592.80 885.35 592.80 C888.36 592.80 889.87 614.73 892.88 625.39 C895.88 636.06 897.39 636.32 900.40 646.14 C903.41 655.96 904.91 674.50 907.92 674.50 C910.93 674.50 912.44 592.80 915.45 592.80 C918.46 592.80 919.97 670.27 922.98 670.27 C925.99 670.27 927.49 660.95 930.50 656.72 C933.51 652.49 935.01 649.52 938.02 649.10 C941.03 648.68 942.54 648.68 945.55 648.68 C948.56 648.68 950.07 648.68 953.08 649.10 C956.09 649.52 957.59 674.50 960.60 674.50 C963.61 674.50 965.12 656.72 968.12 656.72 C971.13 656.72 972.64 666.03 975.65 666.03 C978.66 666.03 980.16 640.00 983.17 640.00 C986.18 640.00 987.69 640.51 990.70 647.41 C993.71 654.31 995.22 674.50 998.23 674.50 C1001.24 674.50 1002.74 660.95 1005.75 660.95 C1008.76 660.95 1010.26 669.42 1013.27 669.42 C1016.28 669.42 1017.79 669.42 1020.80 662.22 C1023.81 655.03 1025.32 580.10 1028.33 580.10 C1031.34 580.10 1032.84 647.83 1035.85 647.83 C1038.86 647.83 1040.37 647.83 1043.38 647.83 C1046.38 647.83 1047.89 674.50 1050.90 674.50 C1053.91 674.50 1055.41 656.72 1058.42 656.72 C1061.43 656.72 1062.94 666.03 1065.95 666.03 C1068.96 666.03 1070.46 640.21 1073.47 640.00 C1076.48 639.79 1077.99 639.79 1081.00 639.79 C1084.01 639.79 1085.52 674.50 1088.53 674.50 C1091.54 674.50 1093.04 660.95 1096.05 660.95 C1099.06 660.95 1100.57 669.42 1103.58 669.42 C1106.59 669.42 1108.09 667.39 1111.10 660.53 C1114.11 653.67 1115.62 635.13 1118.62 635.13 C1121.63 635.13 1123.14 647.83 1126.15 647.83 C1129.16 647.83 1130.66 647.83 1133.67 647.83 C1136.68 647.83 1138.19 674.50 1141.20 674.50 C1144.21 674.50 1145.71 657.99 1148.72 657.99 C1151.73 657.99 1153.24 666.03 1156.25 666.03 C1159.26 666.03 1160.77 635.13 1163.78 635.13 C1166.79 635.13 1168.29 638.26 1171.30 646.14 C1174.31 654.01 1175.82 674.50 1178.83 674.50 C1181.84 674.50 1183.34 660.95 1186.35 660.95 C1189.36 660.95 1190.87 666.71 1193.88 669.42 C1196.88 672.13 1198.39 674.50 1201.40 674.50 C1204.41 674.50 1205.91 647.83 1208.92 647.83 C1211.93 647.83 1213.44 647.83 1216.45 647.83 C1219.46 647.83 1220.96 647.83 1223.97 647.83 C1226.98 647.83 1228.49 674.50 1231.50 674.50 C1234.51 674.50 1236.02 663.49 1239.03 662.22 C1242.04 660.95 1243.54 662.22 1246.55 660.95 C1249.56 659.68 1251.07 647.83 1254.08 647.83 C1257.09 647.83 1258.59 647.83 1261.60 647.83 C1264.61 647.83 1266.12 674.50 1269.12 674.50 C1272.13 674.50 1273.64 660.53 1276.65 660.53 C1279.66 660.53 1281.16 669.42 1284.17 669.42 C1287.18 669.42 1288.69 664.42 1291.70 660.11 C1294.71 655.79 1299.22 647.83 1299.22 647.83 L1299.22 674.50 L855.25 674.50 Z" fill="#3c659d" stroke="none"/><path d="M855.25 643.60 C855.25 643.60 859.76 648.68 862.77 648.68 C865.78 648.68 867.29 622.85 870.30 622.85 C873.31 622.85 874.82 657.14 877.83 657.14 C880.84 657.14 882.34 592.80 885.35 592.80 C888.36 592.80 889.87 614.73 892.88 625.39 C895.88 636.06 897.39 636.32 900.40 646.14 C903.41 655.96 904.91 674.50 907.92 674.50 C910.93 674.50 912.44 592.80 915.45 592.80 C918.46 592.80 919.97 670.27 922.98 670.27 C925.99 670.27 927.49 660.95 930.50 656.72 C933.51 652.49 935.01 649.52 938.02 649.10 C941.03 648.68 942.54 648.68 945.55 648.68 C948.56 648.68 950.07 648.68 953.08 649.10 C956.09 649.52 957.59 674.50 960.60 674.50 C963.61 674.50 965.12 656.72 968.12 656.72 C971.13 656.72 972.64 666.03 975.65 666.03 C978.66 666.03 980.16 640.00 983.17 640.00 C986.18 640.00 987.69 640.51 990.70 647.41 C993.71 654.31 995.22 674.50 998.23 674.50 C1001.24 674.50 1002.74 660.95 1005.75 660.95 C1008.76 660.95 1010.26 669.42 1013.27 669.42 C1016.28 669.42 1017.79 669.42 1020.80 662.22 C1023.81 655.03 1025.32 580.10 1028.33 580.10 C1031.34 580.10 1032.84 647.83 1035.85 647.83 C1038.86 647.83 1040.37 647.83 1043.38 647.83 C1046.38 647.83 1047.89 674.50 1050.90 674.50 C1053.91 674.50 1055.41 656.72 1058.42 656.72 C1061.43 656.72 1062.94 666.03 1065.95 666.03 C1068.96 666.03 1070.46 640.21 1073.47 640.00 C1076.48 639.79 1077.99 639.79 1081.00 639.79 C1084.01 639.79 1085.52 674.50 1088.53 674.50 C1091.54 674.50 1093.04 660.95 1096.05 660.95 C1099.06 660.95 1100.57 669.42 1103.58 669.42 C1106.59 669.42 1108.09 667.39 1111.10 660.53 C1114.11 653.67 1115.62 635.13 1118.62 635.13 C1121.63 635.13 1123.14 647.83 1126.15 647.83 C1129.16 647.83 1130.66 647.83 1133.67 647.83 C1136.68 647.83 1138.19 674.50 1141.20 674.50 C1144.21 674.50 1145.71 657.99 1148.72 657.99 C1151.73 657.99 1153.24 666.03 1156.25 666.03 C1159.26 666.03 1160.77 635.13 1163.78 635.13 C1166.79 635.13 1168.29 638.26 1171.30 646.14 C1174.31 654.01 1175.82 674.50 1178.83 674.50 C1181.84 674.50 1183.34 660.95 1186.35 660.95 C1189.36 660.95 1190.87 666.71 1193.88 669.42 C1196.88 672.13 1198.39 674.50 1201.40 674.50 C1204.41 674.50 1205.91 647.83 1208.92 647.83 C1211.93 647.83 1213.44 647.83 1216.45 647.83 C1219.46 647.83 1220.96 647.83 1223.97 647.83 C1226.98 647.83 1228.49 674.50 1231.50 674.50 C1234.51 674.50 1236.02 663.49 1239.03 662.22 C1242.04 660.95 1243.54 662.22 1246.55 660.95 C1249.56 659.68 1251.07 647.83 1254.08 647.83 C1257.09 647.83 1258.59 647.83 1261.60 647.83 C1264.61 647.83 1266.12 674.50 1269.12 674.50 C1272.13 674.50 1273.64 660.53 1276.65 660.53 C1279.66 660.53 1281.16 669.42 1284.17 669.42 C1287.18 669.42 1288.69 664.42 1291.70 660.11 C1294.71 655.79 1299.22 647.83 1299.22 647.83" fill="none" stroke="#4a86d6" stroke-width="1.9" stroke-linejoin="round" stroke-linecap="round"/><path d="M856.20 642.75 L1300.20 664.34" stroke="#7ddbe1" stroke-width="2.2" fill="none" stroke-linecap="butt"/></g>
<path d="M856.2 674.5 H1310.0" stroke="#e4e4e4" stroke-width="1.4" fill="none"/>
<path d="M930.5 674.5 V680.0" stroke="#e4e4e4" stroke-width="1.2" fill="none"/>
<text x="930.50" y="688.90" font-size="8" text-anchor="middle" fill="#c2c2c2" textLength="25.20" lengthAdjust="spacingAndGlyphs">07:04</text>
<path d="M1020.5 674.5 V680.0" stroke="#e4e4e4" stroke-width="1.2" fill="none"/>
<text x="1020.80" y="688.90" font-size="8" text-anchor="middle" fill="#c2c2c2" textLength="25.20" lengthAdjust="spacingAndGlyphs">07:05</text>
<path d="M1111.5 674.5 V680.0" stroke="#e4e4e4" stroke-width="1.2" fill="none"/>
<text x="1111.10" y="688.90" font-size="8" text-anchor="middle" fill="#c2c2c2" textLength="25.20" lengthAdjust="spacingAndGlyphs">07:06</text>
<path d="M1201.5 674.5 V680.0" stroke="#e4e4e4" stroke-width="1.2" fill="none"/>
<text x="1201.40" y="688.90" font-size="8" text-anchor="middle" fill="#c2c2c2" textLength="25.20" lengthAdjust="spacingAndGlyphs">07:07</text>
<path d="M1291.5 674.5 V680.0" stroke="#e4e4e4" stroke-width="1.2" fill="none"/>
<text x="1291.70" y="688.90" font-size="8" text-anchor="middle" fill="#c2c2c2" textLength="25.20" lengthAdjust="spacingAndGlyphs">07:08</text>
<text x="1352.00" y="675.20" font-size="8.2" text-anchor="end" fill="#c2c2c2" textLength="5.70" lengthAdjust="spacingAndGlyphs">0</text>
<path d="M1366.9 611.5 H1820.9" stroke="#232323" stroke-width="1" fill="none"/>
<text x="1352.00" y="612.30" font-size="8.2" text-anchor="end" fill="#c2c2c2" textLength="5.70" lengthAdjust="spacingAndGlyphs">5</text>
<path d="M1366.9 547.5 H1820.9" stroke="#232323" stroke-width="1" fill="none"/>
<text x="1352.00" y="548.80" font-size="8.2" text-anchor="end" fill="#c2c2c2" textLength="9.30" lengthAdjust="spacingAndGlyphs">10</text>
<clipPath id="clip12"><rect x="1366.9" y="532" width="454.0" height="144.0"/></clipPath>
<g clip-path="url(#clip12)"><path d="M1366.31 636.40 C1366.31 636.40 1370.83 649.10 1373.84 649.10 C1376.85 649.10 1378.36 649.10 1381.37 649.10 C1384.38 649.10 1385.88 661.80 1388.90 661.80 C1391.91 661.80 1393.41 585.60 1396.42 585.60 C1399.44 585.60 1400.94 623.70 1403.95 636.40 C1406.97 649.10 1408.47 641.48 1411.48 649.10 C1414.49 656.72 1416.00 674.50 1419.01 674.50 C1422.02 674.50 1423.53 598.30 1426.54 598.30 C1429.55 598.30 1431.06 661.80 1434.07 661.80 C1437.08 661.80 1438.59 649.10 1441.60 649.10 C1444.61 649.10 1446.12 649.10 1449.13 649.10 C1452.14 649.10 1453.65 649.10 1456.66 649.10 C1459.67 649.10 1461.18 649.10 1464.19 649.10 C1467.20 649.10 1468.70 674.50 1471.72 674.50 C1474.73 674.50 1476.23 661.80 1479.25 661.80 C1482.26 661.80 1483.76 661.80 1486.77 661.80 C1489.79 661.80 1491.29 636.40 1494.30 636.40 C1497.32 636.40 1498.82 641.48 1501.83 649.10 C1504.85 656.72 1506.35 674.50 1509.36 674.50 C1512.37 674.50 1513.88 636.40 1516.89 636.40 C1519.90 636.40 1521.41 661.80 1524.42 661.80 C1527.43 661.80 1528.94 661.80 1531.95 661.80 C1534.96 661.80 1536.47 636.40 1539.48 636.40 C1542.49 636.40 1544.00 649.10 1547.01 649.10 C1550.02 649.10 1551.53 649.10 1554.54 649.10 C1557.55 649.10 1559.05 674.50 1562.07 674.50 C1565.08 674.50 1566.58 661.80 1569.60 661.80 C1572.61 661.80 1574.11 661.80 1577.12 661.80 C1580.14 661.80 1581.64 644.02 1584.65 636.40 C1587.67 628.78 1589.17 623.70 1592.18 623.70 C1595.19 623.70 1596.70 674.50 1599.71 674.50 C1602.72 674.50 1604.23 636.40 1607.24 636.40 C1610.25 636.40 1611.76 661.80 1614.77 661.80 C1617.78 661.80 1619.29 661.80 1622.30 661.80 C1625.31 661.80 1626.82 636.40 1629.83 636.40 C1632.84 636.40 1634.35 649.10 1637.36 649.10 C1640.37 649.10 1641.88 649.10 1644.89 649.10 C1647.90 649.10 1649.40 674.50 1652.42 674.50 C1655.43 674.50 1656.93 661.80 1659.95 661.80 C1662.96 661.80 1664.46 661.80 1667.47 661.80 C1670.49 661.80 1671.99 636.40 1675.00 636.40 C1678.02 636.40 1679.52 641.48 1682.53 649.10 C1685.55 656.72 1687.05 674.50 1690.06 674.50 C1693.07 674.50 1694.58 636.40 1697.59 636.40 C1700.60 636.40 1702.11 654.18 1705.12 661.80 C1708.13 669.42 1709.64 674.50 1712.65 674.50 C1715.66 674.50 1717.17 649.10 1720.18 649.10 C1723.19 649.10 1724.70 649.10 1727.71 649.10 C1730.72 649.10 1732.23 649.10 1735.24 649.10 C1738.25 649.10 1739.75 674.50 1742.77 674.50 C1745.78 674.50 1747.28 661.80 1750.30 661.80 C1753.31 661.80 1754.81 661.80 1757.82 661.80 C1760.84 661.80 1762.34 649.10 1765.35 649.10 C1768.37 649.10 1769.87 649.10 1772.88 649.10 C1775.89 649.10 1777.40 674.50 1780.41 674.50 C1783.42 674.50 1784.93 636.40 1787.94 636.40 C1790.95 636.40 1792.46 661.80 1795.47 661.80 C1798.48 661.80 1799.99 661.80 1803.00 661.80 C1806.01 661.80 1810.53 649.10 1810.53 649.10" fill="none" stroke="#4a86d6" stroke-width="2.1" stroke-linejoin="round" stroke-linecap="round"/><g fill="#4a86d6"><circle cx="1366.31" cy="636.40" r="1.5"/><circle cx="1373.84" cy="649.10" r="1.5"/><circle cx="1381.37" cy="649.10" r="1.5"/><circle cx="1388.90" cy="661.80" r="1.5"/><circle cx="1396.42" cy="585.60" r="1.5"/><circle cx="1403.95" cy="636.40" r="1.5"/><circle cx="1411.48" cy="649.10" r="1.5"/><circle cx="1419.01" cy="674.50" r="1.5"/><circle cx="1426.54" cy="598.30" r="1.5"/><circle cx="1434.07" cy="661.80" r="1.5"/><circle cx="1441.60" cy="649.10" r="1.5"/><circle cx="1449.13" cy="649.10" r="1.5"/><circle cx="1456.66" cy="649.10" r="1.5"/><circle cx="1464.19" cy="649.10" r="1.5"/><circle cx="1471.72" cy="674.50" r="1.5"/><circle cx="1479.25" cy="661.80" r="1.5"/><circle cx="1486.77" cy="661.80" r="1.5"/><circle cx="1494.30" cy="636.40" r="1.5"/><circle cx="1501.83" cy="649.10" r="1.5"/><circle cx="1509.36" cy="674.50" r="1.5"/><circle cx="1516.89" cy="636.40" r="1.5"/><circle cx="1524.42" cy="661.80" r="1.5"/><circle cx="1531.95" cy="661.80" r="1.5"/><circle cx="1539.48" cy="636.40" r="1.5"/><circle cx="1547.01" cy="649.10" r="1.5"/><circle cx="1554.54" cy="649.10" r="1.5"/><circle cx="1562.07" cy="674.50" r="1.5"/><circle cx="1569.60" cy="661.80" r="1.5"/><circle cx="1577.12" cy="661.80" r="1.5"/><circle cx="1584.65" cy="636.40" r="1.5"/><circle cx="1592.18" cy="623.70" r="1.5"/><circle cx="1599.71" cy="674.50" r="1.5"/><circle cx="1607.24" cy="636.40" r="1.5"/><circle cx="1614.77" cy="661.80" r="1.5"/><circle cx="1622.30" cy="661.80" r="1.5"/><circle cx="1629.83" cy="636.40" r="1.5"/><circle cx="1637.36" cy="649.10" r="1.5"/><circle cx="1644.89" cy="649.10" r="1.5"/><circle cx="1652.42" cy="674.50" r="1.5"/><circle cx="1659.95" cy="661.80" r="1.5"/><circle cx="1667.47" cy="661.80" r="1.5"/><circle cx="1675.00" cy="636.40" r="1.5"/><circle cx="1682.53" cy="649.10" r="1.5"/><circle cx="1690.06" cy="674.50" r="1.5"/><circle cx="1697.59" cy="636.40" r="1.5"/><circle cx="1705.12" cy="661.80" r="1.5"/><circle cx="1712.65" cy="674.50" r="1.5"/><circle cx="1720.18" cy="649.10" r="1.5"/><circle cx="1727.71" cy="649.10" r="1.5"/><circle cx="1735.24" cy="649.10" r="1.5"/><circle cx="1742.77" cy="674.50" r="1.5"/><circle cx="1750.30" cy="661.80" r="1.5"/><circle cx="1757.82" cy="661.80" r="1.5"/><circle cx="1765.35" cy="649.10" r="1.5"/><circle cx="1772.88" cy="649.10" r="1.5"/><circle cx="1780.41" cy="674.50" r="1.5"/><circle cx="1787.94" cy="636.40" r="1.5"/><circle cx="1795.47" cy="661.80" r="1.5"/><circle cx="1803.00" cy="661.80" r="1.5"/><circle cx="1810.53" cy="649.10" r="1.5"/></g></g>
<path d="M1366.9 674.5 H1820.9" stroke="#e4e4e4" stroke-width="1.4" fill="none"/>
<path d="M1441.5 674.5 V680.0" stroke="#e4e4e4" stroke-width="1.2" fill="none"/>
<text x="1441.60" y="688.90" font-size="8" text-anchor="middle" fill="#c2c2c2" textLength="25.20" lengthAdjust="spacingAndGlyphs">07:04</text>
<path d="M1531.5 674.5 V680.0" stroke="#e4e4e4" stroke-width="1.2" fill="none"/>
<text x="1531.95" y="688.90" font-size="8" text-anchor="middle" fill="#c2c2c2" textLength="25.20" lengthAdjust="spacingAndGlyphs">07:05</text>
<path d="M1622.5 674.5 V680.0" stroke="#e4e4e4" stroke-width="1.2" fill="none"/>
<text x="1622.30" y="688.90" font-size="8" text-anchor="middle" fill="#c2c2c2" textLength="25.20" lengthAdjust="spacingAndGlyphs">07:06</text>
<path d="M1712.5 674.5 V680.0" stroke="#e4e4e4" stroke-width="1.2" fill="none"/>
<text x="1712.65" y="688.90" font-size="8" text-anchor="middle" fill="#c2c2c2" textLength="25.20" lengthAdjust="spacingAndGlyphs">07:07</text>
<path d="M1803.5 674.5 V680.0" stroke="#e4e4e4" stroke-width="1.2" fill="none"/>
<text x="1803.00" y="688.90" font-size="8" text-anchor="middle" fill="#c2c2c2" textLength="25.20" lengthAdjust="spacingAndGlyphs">07:08</text>
<text x="838.00" y="893.20" font-size="8.2" text-anchor="end" fill="#c2c2c2" textLength="5.70" lengthAdjust="spacingAndGlyphs">0</text>
<path d="M852.9 829.5 H1310.0" stroke="#232323" stroke-width="1" fill="none"/>
<text x="838.00" y="830.30" font-size="8.2" text-anchor="end" fill="#c2c2c2" textLength="5.70" lengthAdjust="spacingAndGlyphs">2</text>
<path d="M852.9 765.5 H1310.0" stroke="#232323" stroke-width="1" fill="none"/>
<text x="838.00" y="766.80" font-size="8.2" text-anchor="end" fill="#c2c2c2" textLength="5.70" lengthAdjust="spacingAndGlyphs">4</text>
<clipPath id="clip21"><rect x="852.9" y="750" width="457.1" height="144.0"/></clipPath>
<g clip-path="url(#clip21)"><path d="M852.63 797.25 C852.63 797.25 857.17 797.25 860.20 797.25 C863.23 797.25 864.74 892.50 867.77 892.50 C870.79 892.50 872.31 892.50 875.33 892.50 C878.36 892.50 879.87 797.25 882.90 797.25 C885.93 797.25 887.44 797.25 890.47 797.25 C893.49 797.25 895.01 797.25 898.03 797.25 C901.06 797.25 902.57 892.50 905.60 892.50 C908.63 892.50 910.14 797.25 913.17 797.25 C916.19 797.25 917.71 892.50 920.73 892.50 C923.76 892.50 925.27 892.50 928.30 892.50 C931.33 892.50 932.84 797.25 935.87 797.25 C938.89 797.25 940.41 797.25 943.43 797.25 C946.46 797.25 947.97 797.25 951.00 797.25 C954.03 797.25 955.54 892.50 958.57 892.50 C961.59 892.50 963.11 892.50 966.13 892.50 C969.16 892.50 970.67 892.50 973.70 892.50 C976.73 892.50 978.24 797.25 981.27 797.25 C984.29 797.25 985.81 797.25 988.83 797.25 C991.86 797.25 993.37 892.50 996.40 892.50 C999.43 892.50 1000.94 892.50 1003.97 892.50 C1006.99 892.50 1008.51 892.50 1011.53 892.50 C1014.56 892.50 1016.07 892.50 1019.10 892.50 C1022.13 892.50 1023.64 797.25 1026.67 797.25 C1029.69 797.25 1031.21 797.25 1034.23 797.25 C1037.26 797.25 1038.77 797.25 1041.80 797.25 C1044.83 797.25 1046.34 892.50 1049.37 892.50 C1052.39 892.50 1053.91 892.50 1056.93 892.50 C1059.96 892.50 1061.47 892.50 1064.50 892.50 C1067.53 892.50 1069.04 797.25 1072.07 797.25 C1075.09 797.25 1076.61 797.25 1079.63 797.25 C1082.66 797.25 1084.17 892.50 1087.20 892.50 C1090.23 892.50 1091.74 892.50 1094.77 892.50 C1097.79 892.50 1099.31 892.50 1102.33 892.50 C1105.36 892.50 1106.87 892.50 1109.90 892.50 C1112.93 892.50 1114.44 797.25 1117.47 797.25 C1120.49 797.25 1122.01 797.25 1125.03 797.25 C1128.06 797.25 1129.57 797.25 1132.60 797.25 C1135.63 797.25 1137.14 892.50 1140.17 892.50 C1143.19 892.50 1144.71 892.50 1147.73 892.50 C1150.76 892.50 1152.27 892.50 1155.30 892.50 C1158.33 892.50 1159.84 797.25 1162.87 797.25 C1165.89 797.25 1167.41 797.25 1170.43 797.25 C1173.46 797.25 1174.97 892.50 1178.00 892.50 C1181.03 892.50 1182.54 892.50 1185.57 892.50 C1188.59 892.50 1190.11 892.50 1193.13 892.50 C1196.16 892.50 1197.67 892.50 1200.70 892.50 C1203.73 892.50 1205.24 797.25 1208.27 797.25 C1211.29 797.25 1212.81 797.25 1215.83 797.25 C1218.86 797.25 1220.37 797.25 1223.40 797.25 C1226.43 797.25 1227.94 892.50 1230.97 892.50 C1233.99 892.50 1235.51 892.50 1238.53 892.50 C1241.56 892.50 1243.07 892.50 1246.10 892.50 C1249.13 892.50 1250.64 797.25 1253.67 797.25 C1256.69 797.25 1258.21 797.25 1261.23 797.25 C1264.26 797.25 1265.77 892.50 1268.80 892.50 C1271.83 892.50 1273.34 892.50 1276.37 892.50 C1279.39 892.50 1280.91 892.50 1283.93 892.50 C1286.96 892.50 1288.47 892.50 1291.50 892.50 C1294.53 892.50 1299.07 797.25 1299.07 797.25 L1299.07 892.50 L852.63 892.50 Z" fill="#3c659d" stroke="none"/><path d="M852.63 797.25 C852.63 797.25 857.17 797.25 860.20 797.25 C863.23 797.25 864.74 892.50 867.77 892.50 C870.79 892.50 872.31 892.50 875.33 892.50 C878.36 892.50 879.87 797.25 882.90 797.25 C885.93 797.25 887.44 797.25 890.47 797.25 C893.49 797.25 895.01 797.25 898.03 797.25 C901.06 797.25 902.57 892.50 905.60 892.50 C908.63 892.50 910.14 797.25 913.17 797.25 C916.19 797.25 917.71 892.50 920.73 892.50 C923.76 892.50 925.27 892.50 928.30 892.50 C931.33 892.50 932.84 797.25 935.87 797.25 C938.89 797.25 940.41 797.25 943.43 797.25 C946.46 797.25 947.97 797.25 951.00 797.25 C954.03 797.25 955.54 892.50 958.57 892.50 C961.59 892.50 963.11 892.50 966.13 892.50 C969.16 892.50 970.67 892.50 973.70 892.50 C976.73 892.50 978.24 797.25 981.27 797.25 C984.29 797.25 985.81 797.25 988.83 797.25 C991.86 797.25 993.37 892.50 996.40 892.50 C999.43 892.50 1000.94 892.50 1003.97 892.50 C1006.99 892.50 1008.51 892.50 1011.53 892.50 C1014.56 892.50 1016.07 892.50 1019.10 892.50 C1022.13 892.50 1023.64 797.25 1026.67 797.25 C1029.69 797.25 1031.21 797.25 1034.23 797.25 C1037.26 797.25 1038.77 797.25 1041.80 797.25 C1044.83 797.25 1046.34 892.50 1049.37 892.50 C1052.39 892.50 1053.91 892.50 1056.93 892.50 C1059.96 892.50 1061.47 892.50 1064.50 892.50 C1067.53 892.50 1069.04 797.25 1072.07 797.25 C1075.09 797.25 1076.61 797.25 1079.63 797.25 C1082.66 797.25 1084.17 892.50 1087.20 892.50 C1090.23 892.50 1091.74 892.50 1094.77 892.50 C1097.79 892.50 1099.31 892.50 1102.33 892.50 C1105.36 892.50 1106.87 892.50 1109.90 892.50 C1112.93 892.50 1114.44 797.25 1117.47 797.25 C1120.49 797.25 1122.01 797.25 1125.03 797.25 C1128.06 797.25 1129.57 797.25 1132.60 797.25 C1135.63 797.25 1137.14 892.50 1140.17 892.50 C1143.19 892.50 1144.71 892.50 1147.73 892.50 C1150.76 892.50 1152.27 892.50 1155.30 892.50 C1158.33 892.50 1159.84 797.25 1162.87 797.25 C1165.89 797.25 1167.41 797.25 1170.43 797.25 C1173.46 797.25 1174.97 892.50 1178.00 892.50 C1181.03 892.50 1182.54 892.50 1185.57 892.50 C1188.59 892.50 1190.11 892.50 1193.13 892.50 C1196.16 892.50 1197.67 892.50 1200.70 892.50 C1203.73 892.50 1205.24 797.25 1208.27 797.25 C1211.29 797.25 1212.81 797.25 1215.83 797.25 C1218.86 797.25 1220.37 797.25 1223.40 797.25 C1226.43 797.25 1227.94 892.50 1230.97 892.50 C1233.99 892.50 1235.51 892.50 1238.53 892.50 C1241.56 892.50 1243.07 892.50 1246.10 892.50 C1249.13 892.50 1250.64 797.25 1253.67 797.25 C1256.69 797.25 1258.21 797.25 1261.23 797.25 C1264.26 797.25 1265.77 892.50 1268.80 892.50 C1271.83 892.50 1273.34 892.50 1276.37 892.50 C1279.39 892.50 1280.91 892.50 1283.93 892.50 C1286.96 892.50 1288.47 892.50 1291.50 892.50 C1294.53 892.50 1299.07 797.25 1299.07 797.25" fill="none" stroke="#4a86d6" stroke-width="1.9" stroke-linejoin="round" stroke-linecap="round"/><path d="M852.90 837.89 L1300.00 860.12" stroke="#7ddbe1" stroke-width="2.2" fill="none" stroke-linecap="butt"/></g>
<path d="M852.9 892.5 H1310.0" stroke="#e4e4e4" stroke-width="1.4" fill="none"/>
<path d="M928.5 892.5 V898.0" stroke="#e4e4e4" stroke-width="1.2" fill="none"/>
<text x="928.30" y="906.90" font-size="8" text-anchor="middle" fill="#c2c2c2" textLength="25.20" lengthAdjust="spacingAndGlyphs">07:04</text>
<path d="M1019.5 892.5 V898.0" stroke="#e4e4e4" stroke-width="1.2" fill="none"/>
<text x="1019.10" y="906.90" font-size="8" text-anchor="middle" fill="#c2c2c2" textLength="25.20" lengthAdjust="spacingAndGlyphs">07:05</text>
<path d="M1109.5 892.5 V898.0" stroke="#e4e4e4" stroke-width="1.2" fill="none"/>
<text x="1109.90" y="906.90" font-size="8" text-anchor="middle" fill="#c2c2c2" textLength="25.20" lengthAdjust="spacingAndGlyphs">07:06</text>
<path d="M1200.5 892.5 V898.0" stroke="#e4e4e4" stroke-width="1.2" fill="none"/>
<text x="1200.70" y="906.90" font-size="8" text-anchor="middle" fill="#c2c2c2" textLength="25.20" lengthAdjust="spacingAndGlyphs">07:07</text>
<path d="M1291.5 892.5 V898.0" stroke="#e4e4e4" stroke-width="1.2" fill="none"/>
<text x="1291.50" y="906.90" font-size="8" text-anchor="middle" fill="#c2c2c2" textLength="25.20" lengthAdjust="spacingAndGlyphs">07:08</text>
<text x="1357.00" y="893.20" font-size="8.2" text-anchor="end" fill="#c2c2c2" textLength="5.70" lengthAdjust="spacingAndGlyphs">0</text>
<path d="M1372.0 850.5 H1820.9" stroke="#232323" stroke-width="1" fill="none"/>
<text x="1357.00" y="851.47" font-size="8.2" text-anchor="end" fill="#c2c2c2" textLength="13.80" lengthAdjust="spacingAndGlyphs">0.5</text>
<path d="M1372.0 808.5 H1820.9" stroke="#232323" stroke-width="1" fill="none"/>
<text x="1357.00" y="809.13" font-size="8.2" text-anchor="end" fill="#c2c2c2" textLength="3.60" lengthAdjust="spacingAndGlyphs">1</text>
<path d="M1372.0 765.5 H1820.9" stroke="#232323" stroke-width="1" fill="none"/>
<text x="1357.00" y="766.80" font-size="8.2" text-anchor="end" fill="#c2c2c2" textLength="11.70" lengthAdjust="spacingAndGlyphs">1.5</text>
<clipPath id="clip22"><rect x="1372.0" y="750" width="448.9" height="144.0"/></clipPath>
<g clip-path="url(#clip22)"><path d="M1371.18 807.83 C1371.18 807.83 1375.65 807.83 1378.62 807.83 C1381.60 807.83 1383.09 892.50 1386.07 892.50 C1389.04 892.50 1390.53 892.50 1393.51 892.50 C1396.48 892.50 1397.97 807.83 1400.95 807.83 C1403.93 807.83 1405.41 807.83 1408.39 807.83 C1411.37 807.83 1412.86 807.83 1415.83 807.83 C1418.81 807.83 1420.30 892.50 1423.27 892.50 C1426.25 892.50 1427.74 807.83 1430.72 807.83 C1433.69 807.83 1435.18 892.50 1438.16 892.50 C1441.13 892.50 1442.62 892.50 1445.60 892.50 C1448.58 892.50 1450.07 807.83 1453.04 807.83 C1456.02 807.83 1457.51 807.83 1460.48 807.83 C1463.46 807.83 1464.95 807.83 1467.92 807.83 C1470.90 807.83 1472.39 892.50 1475.37 892.50 C1478.34 892.50 1479.83 892.50 1482.81 892.50 C1485.78 892.50 1487.27 892.50 1490.25 892.50 C1493.23 892.50 1494.71 807.83 1497.69 807.83 C1500.67 807.83 1502.16 807.83 1505.13 807.83 C1508.11 807.83 1509.60 892.50 1512.57 892.50 C1515.55 892.50 1517.04 892.50 1520.02 892.50 C1522.99 892.50 1524.48 892.50 1527.46 892.50 C1530.43 892.50 1531.92 892.50 1534.90 892.50 C1537.88 892.50 1539.36 807.83 1542.34 807.83 C1545.32 807.83 1546.81 807.83 1549.78 807.83 C1552.76 807.83 1554.25 807.83 1557.22 807.83 C1560.20 807.83 1561.69 892.50 1564.67 892.50 C1567.64 892.50 1569.13 892.50 1572.11 892.50 C1575.08 892.50 1576.57 892.50 1579.55 892.50 C1582.53 892.50 1584.01 807.83 1586.99 807.83 C1589.97 807.83 1591.46 807.83 1594.43 807.83 C1597.41 807.83 1598.90 892.50 1601.88 892.50 C1604.85 892.50 1606.34 892.50 1609.32 892.50 C1612.29 892.50 1613.78 892.50 1616.76 892.50 C1619.73 892.50 1621.22 892.50 1624.20 892.50 C1627.18 892.50 1628.66 807.83 1631.64 807.83 C1634.62 807.83 1636.11 807.83 1639.08 807.83 C1642.06 807.83 1643.55 807.83 1646.52 807.83 C1649.50 807.83 1650.99 892.50 1653.97 892.50 C1656.94 892.50 1658.43 892.50 1661.41 892.50 C1664.38 892.50 1665.87 892.50 1668.85 892.50 C1671.83 892.50 1673.32 807.83 1676.29 807.83 C1679.27 807.83 1680.76 807.83 1683.73 807.83 C1686.71 807.83 1688.20 892.50 1691.17 892.50 C1694.15 892.50 1695.64 892.50 1698.62 892.50 C1701.59 892.50 1703.08 892.50 1706.06 892.50 C1709.03 892.50 1710.52 892.50 1713.50 892.50 C1716.48 892.50 1717.97 807.83 1720.94 807.83 C1723.92 807.83 1725.41 807.83 1728.38 807.83 C1731.36 807.83 1732.85 807.83 1735.82 807.83 C1738.80 807.83 1740.29 892.50 1743.27 892.50 C1746.24 892.50 1747.73 892.50 1750.71 892.50 C1753.68 892.50 1755.17 892.50 1758.15 892.50 C1761.13 892.50 1762.61 807.83 1765.59 807.83 C1768.57 807.83 1770.06 807.83 1773.03 807.83 C1776.01 807.83 1777.50 892.50 1780.47 892.50 C1783.45 892.50 1784.94 892.50 1787.92 892.50 C1790.89 892.50 1792.38 892.50 1795.36 892.50 C1798.33 892.50 1799.82 892.50 1802.80 892.50 C1805.78 892.50 1810.24 807.83 1810.24 807.83" fill="none" stroke="#4a86d6" stroke-width="2.1" stroke-linejoin="round" stroke-linecap="round"/><g fill="#4a86d6"><circle cx="1371.18" cy="807.83" r="1.5"/><circle cx="1378.62" cy="807.83" r="1.5"/><circle cx="1386.07" cy="892.50" r="1.5"/><circle cx="1393.51" cy="892.50" r="1.5"/><circle cx="1400.95" cy="807.83" r="1.5"/><circle cx="1408.39" cy="807.83" r="1.5"/><circle cx="1415.83" cy="807.83" r="1.5"/><circle cx="1423.27" cy="892.50" r="1.5"/><circle cx="1430.72" cy="807.83" r="1.5"/><circle cx="1438.16" cy="892.50" r="1.5"/><circle cx="1445.60" cy="892.50" r="1.5"/><circle cx="1453.04" cy="807.83" r="1.5"/><circle cx="1460.48" cy="807.83" r="1.5"/><circle cx="1467.92" cy="807.83" r="1.5"/><circle cx="1475.37" cy="892.50" r="1.5"/><circle cx="1482.81" cy="892.50" r="1.5"/><circle cx="1490.25" cy="892.50" r="1.5"/><circle cx="1497.69" cy="807.83" r="1.5"/><circle cx="1505.13" cy="807.83" r="1.5"/><circle cx="1512.57" cy="892.50" r="1.5"/><circle cx="1520.02" cy="892.50" r="1.5"/><circle cx="1527.46" cy="892.50" r="1.5"/><circle cx="1534.90" cy="892.50" r="1.5"/><circle cx="1542.34" cy="807.83" r="1.5"/><circle cx="1549.78" cy="807.83" r="1.5"/><circle cx="1557.22" cy="807.83" r="1.5"/><circle cx="1564.67" cy="892.50" r="1.5"/><circle cx="1572.11" cy="892.50" r="1.5"/><circle cx="1579.55" cy="892.50" r="1.5"/><circle cx="1586.99" cy="807.83" r="1.5"/><circle cx="1594.43" cy="807.83" r="1.5"/><circle cx="1601.88" cy="892.50" r="1.5"/><circle cx="1609.32" cy="892.50" r="1.5"/><circle cx="1616.76" cy="892.50" r="1.5"/><circle cx="1624.20" cy="892.50" r="1.5"/><circle cx="1631.64" cy="807.83" r="1.5"/><circle cx="1639.08" cy="807.83" r="1.5"/><circle cx="1646.52" cy="807.83" r="1.5"/><circle cx="1653.97" cy="892.50" r="1.5"/><circle cx="1661.41" cy="892.50" r="1.5"/><circle cx="1668.85" cy="892.50" r="1.5"/><circle cx="1676.29" cy="807.83" r="1.5"/><circle cx="1683.73" cy="807.83" r="1.5"/><circle cx="1691.17" cy="892.50" r="1.5"/><circle cx="1698.62" cy="892.50" r="1.5"/><circle cx="1706.06" cy="892.50" r="1.5"/><circle cx="1713.50" cy="892.50" r="1.5"/><circle cx="1720.94" cy="807.83" r="1.5"/><circle cx="1728.38" cy="807.83" r="1.5"/><circle cx="1735.82" cy="807.83" r="1.5"/><circle cx="1743.27" cy="892.50" r="1.5"/><circle cx="1750.71" cy="892.50" r="1.5"/><circle cx="1758.15" cy="892.50" r="1.5"/><circle cx="1765.59" cy="807.83" r="1.5"/><circle cx="1773.03" cy="807.83" r="1.5"/><circle cx="1780.47" cy="892.50" r="1.5"/><circle cx="1787.92" cy="892.50" r="1.5"/><circle cx="1795.36" cy="892.50" r="1.5"/><circle cx="1802.80" cy="892.50" r="1.5"/><circle cx="1810.24" cy="807.83" r="1.5"/></g></g>
<path d="M1372.0 892.5 H1820.9" stroke="#e4e4e4" stroke-width="1.4" fill="none"/>
<path d="M1445.5 892.5 V898.0" stroke="#e4e4e4" stroke-width="1.2" fill="none"/>
<text x="1445.60" y="906.90" font-size="8" text-anchor="middle" fill="#c2c2c2" textLength="25.20" lengthAdjust="spacingAndGlyphs">07:04</text>
<path d="M1534.5 892.5 V898.0" stroke="#e4e4e4" stroke-width="1.2" fill="none"/>
<text x="1534.90" y="906.90" font-size="8" text-anchor="middle" fill="#c2c2c2" textLength="25.20" lengthAdjust="spacingAndGlyphs">07:05</text>
<path d="M1624.5 892.5 V898.0" stroke="#e4e4e4" stroke-width="1.2" fill="none"/>
<text x="1624.20" y="906.90" font-size="8" text-anchor="middle" fill="#c2c2c2" textLength="25.20" lengthAdjust="spacingAndGlyphs">07:06</text>
<path d="M1713.5 892.5 V898.0" stroke="#e4e4e4" stroke-width="1.2" fill="none"/>
<text x="1713.50" y="906.90" font-size="8" text-anchor="middle" fill="#c2c2c2" textLength="25.20" lengthAdjust="spacingAndGlyphs">07:07</text>
<path d="M1802.5 892.5 V898.0" stroke="#e4e4e4" stroke-width="1.2" fill="none"/>
<text x="1802.80" y="906.90" font-size="8" text-anchor="middle" fill="#c2c2c2" textLength="25.20" lengthAdjust="spacingAndGlyphs">07:08</text>
<text x="841.30" y="1111.20" font-size="8.2" text-anchor="end" fill="#c2c2c2" textLength="5.70" lengthAdjust="spacingAndGlyphs">0</text>
<path d="M856.2 1068.5 H1310.0" stroke="#232323" stroke-width="1" fill="none"/>
<text x="841.30" y="1069.47" font-size="8.2" text-anchor="end" fill="#c2c2c2" textLength="9.30" lengthAdjust="spacingAndGlyphs">10</text>
<path d="M856.2 1026.5 H1310.0" stroke="#232323" stroke-width="1" fill="none"/>
<text x="841.30" y="1027.13" font-size="8.2" text-anchor="end" fill="#c2c2c2" textLength="11.40" lengthAdjust="spacingAndGlyphs">20</text>
<path d="M856.2 983.5 H1310.0" stroke="#232323" stroke-width="1" fill="none"/>
<text x="841.30" y="984.80" font-size="8.2" text-anchor="end" fill="#c2c2c2" textLength="11.40" lengthAdjust="spacingAndGlyphs">30</text>
<clipPath id="clip31"><rect x="856.2" y="968" width="453.8" height="144.0"/></clipPath>
<g clip-path="url(#clip31)"><path d="M855.25 1089.33 C855.25 1089.33 859.76 1097.80 862.77 1097.80 C865.78 1097.80 867.29 1058.85 870.30 1058.85 C873.31 1058.85 874.82 1106.27 877.83 1106.27 C880.84 1106.27 882.34 1086.12 885.35 1077.48 C888.36 1068.84 889.87 1063.09 892.88 1063.09 C895.88 1063.09 897.39 1073.50 900.40 1082.98 C903.41 1092.47 904.91 1110.50 907.92 1110.50 C910.93 1110.50 912.44 1107.20 915.45 1102.03 C918.46 1096.87 919.97 1084.68 922.98 1084.68 C925.99 1084.68 927.49 1097.80 930.50 1097.80 C933.51 1097.80 935.01 1084.68 938.02 1084.68 C941.03 1084.68 942.54 1084.68 945.55 1084.68 C948.56 1084.68 950.07 1063.09 953.08 1063.09 C956.09 1063.09 957.59 1102.03 960.60 1106.27 C963.61 1110.50 965.12 1110.50 968.12 1110.50 C971.13 1110.50 972.64 1107.20 975.65 1102.03 C978.66 1096.87 980.16 1084.68 983.17 1084.68 C986.18 1084.68 987.69 1084.68 990.70 1084.68 C993.71 1084.68 995.22 1106.27 998.23 1106.27 C1001.24 1106.27 1002.74 1106.27 1005.75 1102.03 C1008.76 1097.80 1010.26 1058.85 1013.27 1058.85 C1016.28 1058.85 1017.79 1102.03 1020.80 1102.03 C1023.81 1102.03 1025.32 1016.52 1028.33 1016.52 C1031.34 1016.52 1032.84 1084.68 1035.85 1084.68 C1038.86 1084.68 1040.37 1084.68 1043.38 1084.68 C1046.38 1084.68 1047.89 1102.03 1050.90 1106.27 C1053.91 1110.50 1055.41 1110.50 1058.42 1110.50 C1061.43 1110.50 1062.94 1107.20 1065.95 1102.03 C1068.96 1096.87 1070.46 1084.68 1073.47 1084.68 C1076.48 1084.68 1077.99 1084.68 1081.00 1084.68 C1084.01 1084.68 1085.52 1106.27 1088.53 1106.27 C1091.54 1106.27 1093.04 1106.27 1096.05 1102.03 C1099.06 1097.80 1100.57 1084.68 1103.58 1084.68 C1106.59 1084.68 1108.09 1097.80 1111.10 1097.80 C1114.11 1097.80 1115.62 1049.96 1118.62 1049.96 C1121.63 1049.96 1123.14 1084.68 1126.15 1084.68 C1129.16 1084.68 1130.66 1084.68 1133.67 1084.68 C1136.68 1084.68 1138.19 1102.03 1141.20 1106.27 C1144.21 1110.50 1145.71 1110.50 1148.72 1110.50 C1151.73 1110.50 1153.24 1110.50 1156.25 1102.03 C1159.26 1093.57 1160.77 1054.62 1163.78 1054.62 C1166.79 1054.62 1168.29 1082.39 1171.30 1093.57 C1174.31 1104.74 1175.82 1110.50 1178.83 1110.50 C1181.84 1110.50 1183.34 1110.50 1186.35 1102.03 C1189.36 1093.57 1190.87 1058.85 1193.88 1058.85 C1196.88 1058.85 1198.39 1102.03 1201.40 1102.03 C1204.41 1102.03 1205.91 1079.60 1208.92 1079.60 C1211.93 1079.60 1213.44 1083.83 1216.45 1084.25 C1219.46 1084.68 1220.96 1084.25 1223.97 1084.68 C1226.98 1085.10 1228.49 1102.03 1231.50 1106.27 C1234.51 1110.50 1236.02 1110.50 1239.03 1110.50 C1242.04 1110.50 1243.54 1104.57 1246.55 1102.03 C1249.56 1099.49 1251.07 1101.27 1254.08 1097.80 C1257.09 1094.33 1258.59 1084.68 1261.60 1084.68 C1264.61 1084.68 1266.12 1106.27 1269.12 1106.27 C1272.13 1106.27 1273.64 1106.27 1276.65 1102.03 C1279.66 1097.80 1281.16 1085.10 1284.17 1085.10 C1287.18 1085.10 1288.69 1102.03 1291.70 1102.03 C1294.71 1102.03 1299.22 1080.02 1299.22 1080.02 L1299.22 1110.50 L855.25 1110.50 Z" fill="#3c659d" stroke="none"/><path d="M855.25 1089.33 C855.25 1089.33 859.76 1097.80 862.77 1097.80 C865.78 1097.80 867.29 1058.85 870.30 1058.85 C873.31 1058.85 874.82 1106.27 877.83 1106.27 C880.84 1106.27 882.34 1086.12 885.35 1077.48 C888.36 1068.84 889.87 1063.09 892.88 1063.09 C895.88 1063.09 897.39 1073.50 900.40 1082.98 C903.41 1092.47 904.91 1110.50 907.92 1110.50 C910.93 1110.50 912.44 1107.20 915.45 1102.03 C918.46 1096.87 919.97 1084.68 922.98 1084.68 C925.99 1084.68 927.49 1097.80 930.50 1097.80 C933.51 1097.80 935.01 1084.68 938.02 1084.68 C941.03 1084.68 942.54 1084.68 945.55 1084.68 C948.56 1084.68 950.07 1063.09 953.08 1063.09 C956.09 1063.09 957.59 1102.03 960.60 1106.27 C963.61 1110.50 965.12 1110.50 968.12 1110.50 C971.13 1110.50 972.64 1107.20 975.65 1102.03 C978.66 1096.87 980.16 1084.68 983.17 1084.68 C986.18 1084.68 987.69 1084.68 990.70 1084.68 C993.71 1084.68 995.22 1106.27 998.23 1106.27 C1001.24 1106.27 1002.74 1106.27 1005.75 1102.03 C1008.76 1097.80 1010.26 1058.85 1013.27 1058.85 C1016.28 1058.85 1017.79 1102.03 1020.80 1102.03 C1023.81 1102.03 1025.32 1016.52 1028.33 1016.52 C1031.34 1016.52 1032.84 1084.68 1035.85 1084.68 C1038.86 1084.68 1040.37 1084.68 1043.38 1084.68 C1046.38 1084.68 1047.89 1102.03 1050.90 1106.27 C1053.91 1110.50 1055.41 1110.50 1058.42 1110.50 C1061.43 1110.50 1062.94 1107.20 1065.95 1102.03 C1068.96 1096.87 1070.46 1084.68 1073.47 1084.68 C1076.48 1084.68 1077.99 1084.68 1081.00 1084.68 C1084.01 1084.68 1085.52 1106.27 1088.53 1106.27 C1091.54 1106.27 1093.04 1106.27 1096.05 1102.03 C1099.06 1097.80 1100.57 1084.68 1103.58 1084.68 C1106.59 1084.68 1108.09 1097.80 1111.10 1097.80 C1114.11 1097.80 1115.62 1049.96 1118.62 1049.96 C1121.63 1049.96 1123.14 1084.68 1126.15 1084.68 C1129.16 1084.68 1130.66 1084.68 1133.67 1084.68 C1136.68 1084.68 1138.19 1102.03 1141.20 1106.27 C1144.21 1110.50 1145.71 1110.50 1148.72 1110.50 C1151.73 1110.50 1153.24 1110.50 1156.25 1102.03 C1159.26 1093.57 1160.77 1054.62 1163.78 1054.62 C1166.79 1054.62 1168.29 1082.39 1171.30 1093.57 C1174.31 1104.74 1175.82 1110.50 1178.83 1110.50 C1181.84 1110.50 1183.34 1110.50 1186.35 1102.03 C1189.36 1093.57 1190.87 1058.85 1193.88 1058.85 C1196.88 1058.85 1198.39 1102.03 1201.40 1102.03 C1204.41 1102.03 1205.91 1079.60 1208.92 1079.60 C1211.93 1079.60 1213.44 1083.83 1216.45 1084.25 C1219.46 1084.68 1220.96 1084.25 1223.97 1084.68 C1226.98 1085.10 1228.49 1102.03 1231.50 1106.27 C1234.51 1110.50 1236.02 1110.50 1239.03 1110.50 C1242.04 1110.50 1243.54 1104.57 1246.55 1102.03 C1249.56 1099.49 1251.07 1101.27 1254.08 1097.80 C1257.09 1094.33 1258.59 1084.68 1261.60 1084.68 C1264.61 1084.68 1266.12 1106.27 1269.12 1106.27 C1272.13 1106.27 1273.64 1106.27 1276.65 1102.03 C1279.66 1097.80 1281.16 1085.10 1284.17 1085.10 C1287.18 1085.10 1288.69 1102.03 1291.70 1102.03 C1294.71 1102.03 1299.22 1080.02 1299.22 1080.02" fill="none" stroke="#4a86d6" stroke-width="1.9" stroke-linejoin="round" stroke-linecap="round"/><path d="M856.20 1084.25 L1300.20 1096.95" stroke="#7ddbe1" stroke-width="2.2" fill="none" stroke-linecap="butt"/></g>
<path d="M856.2 1110.5 H1310.0" stroke="#e4e4e4" stroke-width="1.4" fill="none"/>
<path d="M930.5 1110.5 V1116.0" stroke="#e4e4e4" stroke-width="1.2" fill="none"/>
<text x="930.50" y="1124.90" font-size="8" text-anchor="middle" fill="#c2c2c2" textLength="25.20" lengthAdjust="spacingAndGlyphs">07:04</text>
<path d="M1020.5 1110.5 V1116.0" stroke="#e4e4e4" stroke-width="1.2" fill="none"/>
<text x="1020.80" y="1124.90" font-size="8" text-anchor="middle" fill="#c2c2c2" textLength="25.20" lengthAdjust="spacingAndGlyphs">07:05</text>
<path d="M1111.5 1110.5 V1116.0" stroke="#e4e4e4" stroke-width="1.2" fill="none"/>
<text x="1111.10" y="1124.90" font-size="8" text-anchor="middle" fill="#c2c2c2" textLength="25.20" lengthAdjust="spacingAndGlyphs">07:06</text>
<path d="M1201.5 1110.5 V1116.0" stroke="#e4e4e4" stroke-width="1.2" fill="none"/>
<text x="1201.40" y="1124.90" font-size="8" text-anchor="middle" fill="#c2c2c2" textLength="25.20" lengthAdjust="spacingAndGlyphs">07:07</text>
<path d="M1291.5 1110.5 V1116.0" stroke="#e4e4e4" stroke-width="1.2" fill="none"/>
<text x="1291.70" y="1124.90" font-size="8" text-anchor="middle" fill="#c2c2c2" textLength="25.20" lengthAdjust="spacingAndGlyphs">07:08</text>
<text x="1356.00" y="1111.20" font-size="8.2" text-anchor="end" fill="#c2c2c2" textLength="5.70" lengthAdjust="spacingAndGlyphs">0</text>
<path d="M1370.7 1047.5 H1820.9" stroke="#232323" stroke-width="1" fill="none"/>
<text x="1356.00" y="1048.30" font-size="8.2" text-anchor="end" fill="#c2c2c2" textLength="13.80" lengthAdjust="spacingAndGlyphs">2.5</text>
<path d="M1370.7 983.5 H1820.9" stroke="#232323" stroke-width="1" fill="none"/>
<text x="1356.00" y="984.80" font-size="8.2" text-anchor="end" fill="#c2c2c2" textLength="5.70" lengthAdjust="spacingAndGlyphs">5</text>
<clipPath id="clip32"><rect x="1370.7" y="968" width="450.2" height="144.0"/></clipPath>
<g clip-path="url(#clip32)"><path d="M1370.42 1059.70 C1370.42 1059.70 1374.89 1059.70 1377.88 1059.70 C1380.86 1059.70 1382.35 1059.70 1385.33 1059.70 C1388.32 1059.70 1389.81 1085.10 1392.79 1085.10 C1395.78 1085.10 1397.27 1074.94 1400.25 1059.70 C1403.23 1044.46 1404.72 1008.90 1407.71 1008.90 C1410.69 1008.90 1412.18 1039.38 1415.17 1059.70 C1418.15 1080.02 1419.64 1110.50 1422.62 1110.50 C1425.61 1110.50 1427.10 1095.26 1430.08 1085.10 C1433.07 1074.94 1434.56 1059.70 1437.54 1059.70 C1440.53 1059.70 1442.02 1059.70 1445.00 1059.70 C1447.98 1059.70 1449.47 1059.70 1452.46 1059.70 C1455.44 1059.70 1456.93 1059.70 1459.92 1059.70 C1462.90 1059.70 1464.39 1034.30 1467.38 1034.30 C1470.36 1034.30 1471.85 1110.50 1474.83 1110.50 C1477.82 1110.50 1479.31 1110.50 1482.29 1110.50 C1485.28 1110.50 1486.77 1110.50 1489.75 1110.50 C1492.73 1110.50 1494.22 1059.70 1497.21 1059.70 C1500.19 1059.70 1501.68 1059.70 1504.67 1059.70 C1507.65 1059.70 1509.14 1085.10 1512.12 1085.10 C1515.11 1085.10 1516.60 1085.10 1519.58 1085.10 C1522.57 1085.10 1524.06 1034.30 1527.04 1034.30 C1530.03 1034.30 1531.52 1059.70 1534.50 1059.70 C1537.48 1059.70 1538.97 1034.30 1541.96 1034.30 C1544.94 1034.30 1546.43 1059.70 1549.42 1059.70 C1552.40 1059.70 1553.89 1059.70 1556.88 1059.70 C1559.86 1059.70 1561.35 1110.50 1564.33 1110.50 C1567.32 1110.50 1568.81 1085.10 1571.79 1085.10 C1574.78 1085.10 1576.27 1110.50 1579.25 1110.50 C1582.23 1110.50 1583.72 1059.70 1586.71 1059.70 C1589.69 1059.70 1591.18 1059.70 1594.17 1059.70 C1597.15 1059.70 1598.64 1110.50 1601.62 1110.50 C1604.61 1110.50 1606.10 1110.50 1609.08 1110.50 C1612.07 1110.50 1613.56 1059.70 1616.54 1059.70 C1619.53 1059.70 1621.02 1059.70 1624.00 1059.70 C1626.98 1059.70 1628.47 1008.90 1631.46 1008.90 C1634.44 1008.90 1635.93 1059.70 1638.92 1059.70 C1641.90 1059.70 1643.39 1059.70 1646.38 1059.70 C1649.36 1059.70 1650.85 1074.94 1653.83 1085.10 C1656.82 1095.26 1658.31 1110.50 1661.29 1110.50 C1664.28 1110.50 1665.77 1105.42 1668.75 1085.10 C1671.73 1064.78 1673.22 1008.90 1676.21 1008.90 C1679.19 1008.90 1680.68 1039.38 1683.67 1059.70 C1686.65 1080.02 1688.14 1110.50 1691.12 1110.50 C1694.11 1110.50 1695.60 1110.50 1698.58 1110.50 C1701.57 1110.50 1703.06 1034.30 1706.04 1034.30 C1709.03 1034.30 1710.52 1110.50 1713.50 1110.50 C1716.48 1110.50 1717.97 1034.30 1720.96 1034.30 C1723.94 1034.30 1725.43 1059.70 1728.42 1059.70 C1731.40 1059.70 1732.89 1059.70 1735.88 1059.70 C1738.86 1059.70 1740.35 1110.50 1743.33 1110.50 C1746.32 1110.50 1747.81 1085.10 1750.79 1085.10 C1753.78 1085.10 1755.27 1110.50 1758.25 1110.50 C1761.23 1110.50 1762.72 1059.70 1765.71 1059.70 C1768.69 1059.70 1770.18 1059.70 1773.17 1059.70 C1776.15 1059.70 1777.64 1110.50 1780.62 1110.50 C1783.61 1110.50 1785.10 1095.26 1788.08 1085.10 C1791.07 1074.94 1792.56 1059.70 1795.54 1059.70 C1798.53 1059.70 1800.02 1085.10 1803.00 1085.10 C1805.98 1085.10 1810.46 1034.30 1810.46 1034.30" fill="none" stroke="#4a86d6" stroke-width="2.1" stroke-linejoin="round" stroke-linecap="round"/><g fill="#4a86d6"><circle cx="1370.42" cy="1059.70" r="1.5"/><circle cx="1377.88" cy="1059.70" r="1.5"/><circle cx="1385.33" cy="1059.70" r="1.5"/><circle cx="1392.79" cy="1085.10" r="1.5"/><circle cx="1400.25" cy="1059.70" r="1.5"/><circle cx="1407.71" cy="1008.90" r="1.5"/><circle cx="1415.17" cy="1059.70" r="1.5"/><circle cx="1422.62" cy="1110.50" r="1.5"/><circle cx="1430.08" cy="1085.10" r="1.5"/><circle cx="1437.54" cy="1059.70" r="1.5"/><circle cx="1445.00" cy="1059.70" r="1.5"/><circle cx="1452.46" cy="1059.70" r="1.5"/><circle cx="1459.92" cy="1059.70" r="1.5"/><circle cx="1467.38" cy="1034.30" r="1.5"/><circle cx="1474.83" cy="1110.50" r="1.5"/><circle cx="1482.29" cy="1110.50" r="1.5"/><circle cx="1489.75" cy="1110.50" r="1.5"/><circle cx="1497.21" cy="1059.70" r="1.5"/><circle cx="1504.67" cy="1059.70" r="1.5"/><circle cx="1512.12" cy="1085.10" r="1.5"/><circle cx="1519.58" cy="1085.10" r="1.5"/><circle cx="1527.04" cy="1034.30" r="1.5"/><circle cx="1534.50" cy="1059.70" r="1.5"/><circle cx="1541.96" cy="1034.30" r="1.5"/><circle cx="1549.42" cy="1059.70" r="1.5"/><circle cx="1556.88" cy="1059.70" r="1.5"/><circle cx="1564.33" cy="1110.50" r="1.5"/><circle cx="1571.79" cy="1085.10" r="1.5"/><circle cx="1579.25" cy="1110.50" r="1.5"/><circle cx="1586.71" cy="1059.70" r="1.5"/><circle cx="1594.17" cy="1059.70" r="1.5"/><circle cx="1601.62" cy="1110.50" r="1.5"/><circle cx="1609.08" cy="1110.50" r="1.5"/><circle cx="1616.54" cy="1059.70" r="1.5"/><circle cx="1624.00" cy="1059.70" r="1.5"/><circle cx="1631.46" cy="1008.90" r="1.5"/><circle cx="1638.92" cy="1059.70" r="1.5"/><circle cx="1646.38" cy="1059.70" r="1.5"/><circle cx="1653.83" cy="1085.10" r="1.5"/><circle cx="1661.29" cy="1110.50" r="1.5"/><circle cx="1668.75" cy="1085.10" r="1.5"/><circle cx="1676.21" cy="1008.90" r="1.5"/><circle cx="1683.67" cy="1059.70" r="1.5"/><circle cx="1691.12" cy="1110.50" r="1.5"/><circle cx="1698.58" cy="1110.50" r="1.5"/><circle cx="1706.04" cy="1034.30" r="1.5"/><circle cx="1713.50" cy="1110.50" r="1.5"/><circle cx="1720.96" cy="1034.30" r="1.5"/><circle cx="1728.42" cy="1059.70" r="1.5"/><circle cx="1735.88" cy="1059.70" r="1.5"/><circle cx="1743.33" cy="1110.50" r="1.5"/><circle cx="1750.79" cy="1085.10" r="1.5"/><circle cx="1758.25" cy="1110.50" r="1.5"/><circle cx="1765.71" cy="1059.70" r="1.5"/><circle cx="1773.17" cy="1059.70" r="1.5"/><circle cx="1780.62" cy="1110.50" r="1.5"/><circle cx="1788.08" cy="1085.10" r="1.5"/><circle cx="1795.54" cy="1059.70" r="1.5"/><circle cx="1803.00" cy="1085.10" r="1.5"/><circle cx="1810.46" cy="1034.30" r="1.5"/></g></g>
<path d="M1370.7 1110.5 H1820.9" stroke="#e4e4e4" stroke-width="1.4" fill="none"/>
<path d="M1445.5 1110.5 V1116.0" stroke="#e4e4e4" stroke-width="1.2" fill="none"/>
<text x="1445.00" y="1124.90" font-size="8" text-anchor="middle" fill="#c2c2c2" textLength="25.20" lengthAdjust="spacingAndGlyphs">07:04</text>
<path d="M1534.5 1110.5 V1116.0" stroke="#e4e4e4" stroke-width="1.2" fill="none"/>
<text x="1534.50" y="1124.90" font-size="8" text-anchor="middle" fill="#c2c2c2" textLength="25.20" lengthAdjust="spacingAndGlyphs">07:05</text>
<path d="M1624.5 1110.5 V1116.0" stroke="#e4e4e4" stroke-width="1.2" fill="none"/>
<text x="1624.00" y="1124.90" font-size="8" text-anchor="middle" fill="#c2c2c2" textLength="25.20" lengthAdjust="spacingAndGlyphs">07:06</text>
<path d="M1713.5 1110.5 V1116.0" stroke="#e4e4e4" stroke-width="1.2" fill="none"/>
<text x="1713.50" y="1124.90" font-size="8" text-anchor="middle" fill="#c2c2c2" textLength="25.20" lengthAdjust="spacingAndGlyphs">07:07</text>
<path d="M1803.5 1110.5 V1116.0" stroke="#e4e4e4" stroke-width="1.2" fill="none"/>
<text x="1803.00" y="1124.90" font-size="8" text-anchor="middle" fill="#c2c2c2" textLength="25.20" lengthAdjust="spacingAndGlyphs">07:08</text></svg>
</body>
</html>
